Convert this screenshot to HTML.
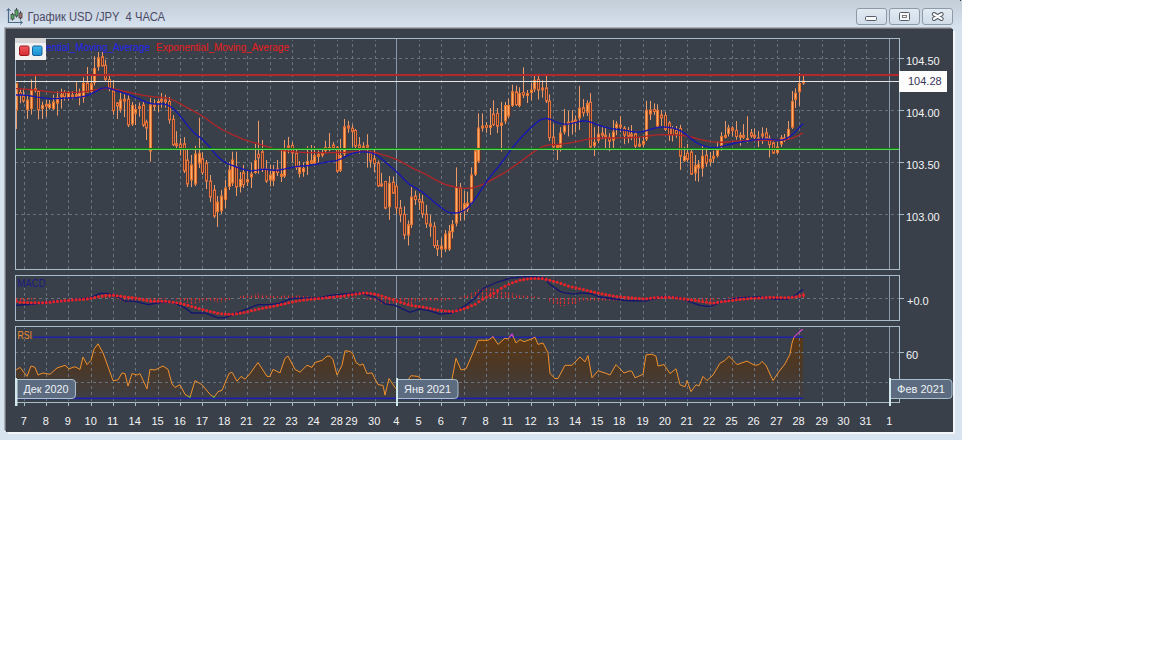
<!DOCTYPE html>
<html><head><meta charset="utf-8"><style>
html,body{margin:0;padding:0;background:#fff;width:1152px;height:648px;overflow:hidden;font-family:"Liberation Sans",sans-serif}
#win{position:absolute;left:0;top:0;width:962px;height:440px;background:linear-gradient(#c3ced9,#ccd7e3 14px,#d6e2ee 27px,#d6e3ef 30px,#d7e4f0)}
#dark{position:absolute;left:6px;top:29px;width:947px;height:403px;background:#39404a;box-shadow:2px 2px 0 #f2f6fa,-1px -1px 0 #76767a,-2px -2px 0 #a9b0b8}
#title{position:absolute;left:27px;top:9px;font-size:12px;line-height:14px;color:#4b4a66;white-space:pre}
.btn{position:absolute;top:8px;height:17px;border:1px solid #8d9aa8;border-radius:3px;background:linear-gradient(#e2eaf2,#d0dce8);box-sizing:border-box}
svg{position:absolute;left:0;top:0}
</style></head><body>
<div id="win"></div>
<div id="dark"></div>
<div class="btn" style="left:856px;width:31px"></div>
<div class="btn" style="left:889px;width:31px"></div>
<div class="btn" style="left:922px;width:31px"></div>
<svg width="1152" height="648" viewBox="0 0 1152 648">
<defs><linearGradient id="rg" gradientUnits="userSpaceOnUse" x1="0" y1="330" x2="0" y2="400"><stop offset="0" stop-color="#603810"/><stop offset="0.55" stop-color="#4a3828"/><stop offset="1" stop-color="#3e3f45"/></linearGradient></defs>
<defs><clipPath id="cfill"><rect x="16" y="337" width="883" height="62"/></clipPath></defs>
<polygon points="16.0,398.0 16.0,370.0 20.0,367.4 27.0,376.4 31.0,366.0 35.0,367.4 38.0,375.0 43.0,373.0 50.0,374.3 57.0,368.0 65.0,365.3 69.0,368.8 75.0,366.7 80.0,369.4 83.0,357.0 87.0,364.6 91.0,360.4 94.0,349.3 98.0,343.8 103.0,352.8 113.0,380.6 118.0,379.9 122.0,373.0 125.0,373.6 128.0,386.0 132.0,373.6 137.0,375.0 140.0,373.6 147.0,388.9 150.0,369.4 155.0,370.0 163.0,366.0 168.0,369.4 172.0,384.0 175.0,387.5 180.0,384.7 185.0,394.4 190.0,397.2 195.0,380.6 202.0,384.7 210.0,394.4 214.0,397.2 218.0,391.7 222.0,390.3 229.0,373.6 232.0,372.2 237.0,381.2 241.0,376.4 245.0,379.2 250.0,373.6 258.0,362.5 267.0,376.4 270.0,376.4 273.0,369.4 280.0,372.9 285.0,358.3 288.0,356.2 295.0,369.4 300.0,372.2 307.0,365.3 312.0,367.4 315.0,362.5 322.0,360.4 327.0,356.2 330.0,356.2 333.0,359.7 337.0,375.0 342.0,365.3 345.0,350.7 350.0,351.4 353.0,354.2 356.0,362.5 360.0,365.3 363.0,363.9 367.0,373.6 372.0,372.9 378.0,384.7 383.0,385.4 385.0,395.1 389.0,378.5 395.0,387.5 400.0,392.0 405.0,384.0 411.0,375.7 418.0,376.4 421.0,379.0 428.0,385.0 436.0,390.0 444.0,388.0 452.0,379.0 456.0,358.3 461.0,370.0 466.0,368.8 473.0,352.8 478.0,340.3 488.0,340.3 493.0,336.8 498.0,344.4 505.0,338.2 508.0,338.9 512.0,334.0 516.0,343.0 520.0,339.6 524.0,341.7 530.0,339.6 535.0,337.2 538.0,344.4 543.0,343.0 548.0,352.8 550.0,373.6 555.0,378.5 558.0,378.5 565.0,365.3 572.0,365.3 580.0,357.0 585.0,361.8 588.0,355.6 592.0,377.8 598.0,370.8 605.0,373.0 610.0,375.0 616.0,364.6 624.0,373.0 630.0,370.8 632.0,371.5 635.0,377.8 643.0,374.3 646.0,354.9 652.0,354.2 656.0,356.2 658.0,366.0 664.0,364.6 670.0,373.6 676.0,368.8 680.0,384.7 685.0,386.8 687.0,380.6 691.0,391.7 696.0,384.7 699.0,386.0 703.0,376.4 707.0,380.6 713.0,375.0 720.0,363.2 725.0,360.4 729.0,356.2 735.0,362.5 737.0,364.6 743.0,362.5 747.0,361.1 752.0,363.9 755.0,365.3 759.0,364.6 762.0,361.4 766.0,365.3 773.0,380.6 778.0,373.0 785.0,363.9 790.0,354.2 792.0,343.0 794.0,337.2 800.0,331.2 803.0,329.2 803.0,398.0" fill="url(#rg)" clip-path="url(#cfill)"/>
<line x1="24.5" y1="40" x2="24.5" y2="269" stroke="#69737e" stroke-dasharray="3 3" stroke-dashoffset="2"/>
<line x1="46.5" y1="40" x2="46.5" y2="269" stroke="#69737e" stroke-dasharray="3 3" stroke-dashoffset="2"/>
<line x1="68.5" y1="40" x2="68.5" y2="269" stroke="#69737e" stroke-dasharray="3 3" stroke-dashoffset="2"/>
<line x1="91.5" y1="40" x2="91.5" y2="269" stroke="#69737e" stroke-dasharray="3 3" stroke-dashoffset="2"/>
<line x1="113.5" y1="40" x2="113.5" y2="269" stroke="#69737e" stroke-dasharray="3 3" stroke-dashoffset="2"/>
<line x1="135.5" y1="40" x2="135.5" y2="269" stroke="#69737e" stroke-dasharray="3 3" stroke-dashoffset="2"/>
<line x1="158.5" y1="40" x2="158.5" y2="269" stroke="#69737e" stroke-dasharray="3 3" stroke-dashoffset="2"/>
<line x1="180.5" y1="40" x2="180.5" y2="269" stroke="#69737e" stroke-dasharray="3 3" stroke-dashoffset="2"/>
<line x1="202.5" y1="40" x2="202.5" y2="269" stroke="#69737e" stroke-dasharray="3 3" stroke-dashoffset="2"/>
<line x1="225.5" y1="40" x2="225.5" y2="269" stroke="#69737e" stroke-dasharray="3 3" stroke-dashoffset="2"/>
<line x1="247.5" y1="40" x2="247.5" y2="269" stroke="#69737e" stroke-dasharray="3 3" stroke-dashoffset="2"/>
<line x1="270.5" y1="40" x2="270.5" y2="269" stroke="#69737e" stroke-dasharray="3 3" stroke-dashoffset="2"/>
<line x1="292.5" y1="40" x2="292.5" y2="269" stroke="#69737e" stroke-dasharray="3 3" stroke-dashoffset="2"/>
<line x1="314.5" y1="40" x2="314.5" y2="269" stroke="#69737e" stroke-dasharray="3 3" stroke-dashoffset="2"/>
<line x1="337.5" y1="40" x2="337.5" y2="269" stroke="#69737e" stroke-dasharray="3 3" stroke-dashoffset="2"/>
<line x1="352.5" y1="40" x2="352.5" y2="269" stroke="#69737e" stroke-dasharray="3 3" stroke-dashoffset="2"/>
<line x1="375.5" y1="40" x2="375.5" y2="269" stroke="#69737e" stroke-dasharray="3 3" stroke-dashoffset="2"/>
<line x1="419.5" y1="40" x2="419.5" y2="269" stroke="#69737e" stroke-dasharray="3 3" stroke-dashoffset="2"/>
<line x1="441.5" y1="40" x2="441.5" y2="269" stroke="#69737e" stroke-dasharray="3 3" stroke-dashoffset="2"/>
<line x1="464.5" y1="40" x2="464.5" y2="269" stroke="#69737e" stroke-dasharray="3 3" stroke-dashoffset="2"/>
<line x1="486.5" y1="40" x2="486.5" y2="269" stroke="#69737e" stroke-dasharray="3 3" stroke-dashoffset="2"/>
<line x1="508.5" y1="40" x2="508.5" y2="269" stroke="#69737e" stroke-dasharray="3 3" stroke-dashoffset="2"/>
<line x1="531.5" y1="40" x2="531.5" y2="269" stroke="#69737e" stroke-dasharray="3 3" stroke-dashoffset="2"/>
<line x1="553.5" y1="40" x2="553.5" y2="269" stroke="#69737e" stroke-dasharray="3 3" stroke-dashoffset="2"/>
<line x1="575.5" y1="40" x2="575.5" y2="269" stroke="#69737e" stroke-dasharray="3 3" stroke-dashoffset="2"/>
<line x1="598.5" y1="40" x2="598.5" y2="269" stroke="#69737e" stroke-dasharray="3 3" stroke-dashoffset="2"/>
<line x1="620.5" y1="40" x2="620.5" y2="269" stroke="#69737e" stroke-dasharray="3 3" stroke-dashoffset="2"/>
<line x1="643.5" y1="40" x2="643.5" y2="269" stroke="#69737e" stroke-dasharray="3 3" stroke-dashoffset="2"/>
<line x1="665.5" y1="40" x2="665.5" y2="269" stroke="#69737e" stroke-dasharray="3 3" stroke-dashoffset="2"/>
<line x1="687.5" y1="40" x2="687.5" y2="269" stroke="#69737e" stroke-dasharray="3 3" stroke-dashoffset="2"/>
<line x1="710.5" y1="40" x2="710.5" y2="269" stroke="#69737e" stroke-dasharray="3 3" stroke-dashoffset="2"/>
<line x1="732.5" y1="40" x2="732.5" y2="269" stroke="#69737e" stroke-dasharray="3 3" stroke-dashoffset="2"/>
<line x1="754.5" y1="40" x2="754.5" y2="269" stroke="#69737e" stroke-dasharray="3 3" stroke-dashoffset="2"/>
<line x1="777.5" y1="40" x2="777.5" y2="269" stroke="#69737e" stroke-dasharray="3 3" stroke-dashoffset="2"/>
<line x1="799.5" y1="40" x2="799.5" y2="269" stroke="#69737e" stroke-dasharray="3 3" stroke-dashoffset="2"/>
<line x1="822.5" y1="40" x2="822.5" y2="269" stroke="#69737e" stroke-dasharray="3 3" stroke-dashoffset="2"/>
<line x1="844.5" y1="40" x2="844.5" y2="269" stroke="#69737e" stroke-dasharray="3 3" stroke-dashoffset="2"/>
<line x1="866.5" y1="40" x2="866.5" y2="269" stroke="#69737e" stroke-dasharray="3 3" stroke-dashoffset="2"/>
<line x1="16" y1="58.5" x2="899" y2="58.5" stroke="#69737e" stroke-dasharray="3 3" stroke-dashoffset="1"/>
<line x1="16" y1="110.5" x2="899" y2="110.5" stroke="#69737e" stroke-dasharray="3 3" stroke-dashoffset="1"/>
<line x1="16" y1="162.5" x2="899" y2="162.5" stroke="#69737e" stroke-dasharray="3 3" stroke-dashoffset="1"/>
<line x1="16" y1="214.5" x2="899" y2="214.5" stroke="#69737e" stroke-dasharray="3 3" stroke-dashoffset="1"/>
<line x1="24.5" y1="277" x2="24.5" y2="320" stroke="#69737e" stroke-dasharray="3 3" stroke-dashoffset="2"/>
<line x1="46.5" y1="277" x2="46.5" y2="320" stroke="#69737e" stroke-dasharray="3 3" stroke-dashoffset="2"/>
<line x1="68.5" y1="277" x2="68.5" y2="320" stroke="#69737e" stroke-dasharray="3 3" stroke-dashoffset="2"/>
<line x1="91.5" y1="277" x2="91.5" y2="320" stroke="#69737e" stroke-dasharray="3 3" stroke-dashoffset="2"/>
<line x1="113.5" y1="277" x2="113.5" y2="320" stroke="#69737e" stroke-dasharray="3 3" stroke-dashoffset="2"/>
<line x1="135.5" y1="277" x2="135.5" y2="320" stroke="#69737e" stroke-dasharray="3 3" stroke-dashoffset="2"/>
<line x1="158.5" y1="277" x2="158.5" y2="320" stroke="#69737e" stroke-dasharray="3 3" stroke-dashoffset="2"/>
<line x1="180.5" y1="277" x2="180.5" y2="320" stroke="#69737e" stroke-dasharray="3 3" stroke-dashoffset="2"/>
<line x1="202.5" y1="277" x2="202.5" y2="320" stroke="#69737e" stroke-dasharray="3 3" stroke-dashoffset="2"/>
<line x1="225.5" y1="277" x2="225.5" y2="320" stroke="#69737e" stroke-dasharray="3 3" stroke-dashoffset="2"/>
<line x1="247.5" y1="277" x2="247.5" y2="320" stroke="#69737e" stroke-dasharray="3 3" stroke-dashoffset="2"/>
<line x1="270.5" y1="277" x2="270.5" y2="320" stroke="#69737e" stroke-dasharray="3 3" stroke-dashoffset="2"/>
<line x1="292.5" y1="277" x2="292.5" y2="320" stroke="#69737e" stroke-dasharray="3 3" stroke-dashoffset="2"/>
<line x1="314.5" y1="277" x2="314.5" y2="320" stroke="#69737e" stroke-dasharray="3 3" stroke-dashoffset="2"/>
<line x1="337.5" y1="277" x2="337.5" y2="320" stroke="#69737e" stroke-dasharray="3 3" stroke-dashoffset="2"/>
<line x1="352.5" y1="277" x2="352.5" y2="320" stroke="#69737e" stroke-dasharray="3 3" stroke-dashoffset="2"/>
<line x1="375.5" y1="277" x2="375.5" y2="320" stroke="#69737e" stroke-dasharray="3 3" stroke-dashoffset="2"/>
<line x1="419.5" y1="277" x2="419.5" y2="320" stroke="#69737e" stroke-dasharray="3 3" stroke-dashoffset="2"/>
<line x1="441.5" y1="277" x2="441.5" y2="320" stroke="#69737e" stroke-dasharray="3 3" stroke-dashoffset="2"/>
<line x1="464.5" y1="277" x2="464.5" y2="320" stroke="#69737e" stroke-dasharray="3 3" stroke-dashoffset="2"/>
<line x1="486.5" y1="277" x2="486.5" y2="320" stroke="#69737e" stroke-dasharray="3 3" stroke-dashoffset="2"/>
<line x1="508.5" y1="277" x2="508.5" y2="320" stroke="#69737e" stroke-dasharray="3 3" stroke-dashoffset="2"/>
<line x1="531.5" y1="277" x2="531.5" y2="320" stroke="#69737e" stroke-dasharray="3 3" stroke-dashoffset="2"/>
<line x1="553.5" y1="277" x2="553.5" y2="320" stroke="#69737e" stroke-dasharray="3 3" stroke-dashoffset="2"/>
<line x1="575.5" y1="277" x2="575.5" y2="320" stroke="#69737e" stroke-dasharray="3 3" stroke-dashoffset="2"/>
<line x1="598.5" y1="277" x2="598.5" y2="320" stroke="#69737e" stroke-dasharray="3 3" stroke-dashoffset="2"/>
<line x1="620.5" y1="277" x2="620.5" y2="320" stroke="#69737e" stroke-dasharray="3 3" stroke-dashoffset="2"/>
<line x1="643.5" y1="277" x2="643.5" y2="320" stroke="#69737e" stroke-dasharray="3 3" stroke-dashoffset="2"/>
<line x1="665.5" y1="277" x2="665.5" y2="320" stroke="#69737e" stroke-dasharray="3 3" stroke-dashoffset="2"/>
<line x1="687.5" y1="277" x2="687.5" y2="320" stroke="#69737e" stroke-dasharray="3 3" stroke-dashoffset="2"/>
<line x1="710.5" y1="277" x2="710.5" y2="320" stroke="#69737e" stroke-dasharray="3 3" stroke-dashoffset="2"/>
<line x1="732.5" y1="277" x2="732.5" y2="320" stroke="#69737e" stroke-dasharray="3 3" stroke-dashoffset="2"/>
<line x1="754.5" y1="277" x2="754.5" y2="320" stroke="#69737e" stroke-dasharray="3 3" stroke-dashoffset="2"/>
<line x1="777.5" y1="277" x2="777.5" y2="320" stroke="#69737e" stroke-dasharray="3 3" stroke-dashoffset="2"/>
<line x1="799.5" y1="277" x2="799.5" y2="320" stroke="#69737e" stroke-dasharray="3 3" stroke-dashoffset="2"/>
<line x1="822.5" y1="277" x2="822.5" y2="320" stroke="#69737e" stroke-dasharray="3 3" stroke-dashoffset="2"/>
<line x1="844.5" y1="277" x2="844.5" y2="320" stroke="#69737e" stroke-dasharray="3 3" stroke-dashoffset="2"/>
<line x1="866.5" y1="277" x2="866.5" y2="320" stroke="#69737e" stroke-dasharray="3 3" stroke-dashoffset="2"/>
<line x1="16" y1="298.5" x2="899" y2="298.5" stroke="#69737e" stroke-dasharray="3 3" stroke-dashoffset="1"/>
<line x1="24.5" y1="328" x2="24.5" y2="402" stroke="#69737e" stroke-dasharray="3 3" stroke-dashoffset="2"/>
<line x1="46.5" y1="328" x2="46.5" y2="402" stroke="#69737e" stroke-dasharray="3 3" stroke-dashoffset="2"/>
<line x1="68.5" y1="328" x2="68.5" y2="402" stroke="#69737e" stroke-dasharray="3 3" stroke-dashoffset="2"/>
<line x1="91.5" y1="328" x2="91.5" y2="402" stroke="#69737e" stroke-dasharray="3 3" stroke-dashoffset="2"/>
<line x1="113.5" y1="328" x2="113.5" y2="402" stroke="#69737e" stroke-dasharray="3 3" stroke-dashoffset="2"/>
<line x1="135.5" y1="328" x2="135.5" y2="402" stroke="#69737e" stroke-dasharray="3 3" stroke-dashoffset="2"/>
<line x1="158.5" y1="328" x2="158.5" y2="402" stroke="#69737e" stroke-dasharray="3 3" stroke-dashoffset="2"/>
<line x1="180.5" y1="328" x2="180.5" y2="402" stroke="#69737e" stroke-dasharray="3 3" stroke-dashoffset="2"/>
<line x1="202.5" y1="328" x2="202.5" y2="402" stroke="#69737e" stroke-dasharray="3 3" stroke-dashoffset="2"/>
<line x1="225.5" y1="328" x2="225.5" y2="402" stroke="#69737e" stroke-dasharray="3 3" stroke-dashoffset="2"/>
<line x1="247.5" y1="328" x2="247.5" y2="402" stroke="#69737e" stroke-dasharray="3 3" stroke-dashoffset="2"/>
<line x1="270.5" y1="328" x2="270.5" y2="402" stroke="#69737e" stroke-dasharray="3 3" stroke-dashoffset="2"/>
<line x1="292.5" y1="328" x2="292.5" y2="402" stroke="#69737e" stroke-dasharray="3 3" stroke-dashoffset="2"/>
<line x1="314.5" y1="328" x2="314.5" y2="402" stroke="#69737e" stroke-dasharray="3 3" stroke-dashoffset="2"/>
<line x1="337.5" y1="328" x2="337.5" y2="402" stroke="#69737e" stroke-dasharray="3 3" stroke-dashoffset="2"/>
<line x1="352.5" y1="328" x2="352.5" y2="402" stroke="#69737e" stroke-dasharray="3 3" stroke-dashoffset="2"/>
<line x1="375.5" y1="328" x2="375.5" y2="402" stroke="#69737e" stroke-dasharray="3 3" stroke-dashoffset="2"/>
<line x1="419.5" y1="328" x2="419.5" y2="402" stroke="#69737e" stroke-dasharray="3 3" stroke-dashoffset="2"/>
<line x1="441.5" y1="328" x2="441.5" y2="402" stroke="#69737e" stroke-dasharray="3 3" stroke-dashoffset="2"/>
<line x1="464.5" y1="328" x2="464.5" y2="402" stroke="#69737e" stroke-dasharray="3 3" stroke-dashoffset="2"/>
<line x1="486.5" y1="328" x2="486.5" y2="402" stroke="#69737e" stroke-dasharray="3 3" stroke-dashoffset="2"/>
<line x1="508.5" y1="328" x2="508.5" y2="402" stroke="#69737e" stroke-dasharray="3 3" stroke-dashoffset="2"/>
<line x1="531.5" y1="328" x2="531.5" y2="402" stroke="#69737e" stroke-dasharray="3 3" stroke-dashoffset="2"/>
<line x1="553.5" y1="328" x2="553.5" y2="402" stroke="#69737e" stroke-dasharray="3 3" stroke-dashoffset="2"/>
<line x1="575.5" y1="328" x2="575.5" y2="402" stroke="#69737e" stroke-dasharray="3 3" stroke-dashoffset="2"/>
<line x1="598.5" y1="328" x2="598.5" y2="402" stroke="#69737e" stroke-dasharray="3 3" stroke-dashoffset="2"/>
<line x1="620.5" y1="328" x2="620.5" y2="402" stroke="#69737e" stroke-dasharray="3 3" stroke-dashoffset="2"/>
<line x1="643.5" y1="328" x2="643.5" y2="402" stroke="#69737e" stroke-dasharray="3 3" stroke-dashoffset="2"/>
<line x1="665.5" y1="328" x2="665.5" y2="402" stroke="#69737e" stroke-dasharray="3 3" stroke-dashoffset="2"/>
<line x1="687.5" y1="328" x2="687.5" y2="402" stroke="#69737e" stroke-dasharray="3 3" stroke-dashoffset="2"/>
<line x1="710.5" y1="328" x2="710.5" y2="402" stroke="#69737e" stroke-dasharray="3 3" stroke-dashoffset="2"/>
<line x1="732.5" y1="328" x2="732.5" y2="402" stroke="#69737e" stroke-dasharray="3 3" stroke-dashoffset="2"/>
<line x1="754.5" y1="328" x2="754.5" y2="402" stroke="#69737e" stroke-dasharray="3 3" stroke-dashoffset="2"/>
<line x1="777.5" y1="328" x2="777.5" y2="402" stroke="#69737e" stroke-dasharray="3 3" stroke-dashoffset="2"/>
<line x1="799.5" y1="328" x2="799.5" y2="402" stroke="#69737e" stroke-dasharray="3 3" stroke-dashoffset="2"/>
<line x1="822.5" y1="328" x2="822.5" y2="402" stroke="#69737e" stroke-dasharray="3 3" stroke-dashoffset="2"/>
<line x1="844.5" y1="328" x2="844.5" y2="402" stroke="#69737e" stroke-dasharray="3 3" stroke-dashoffset="2"/>
<line x1="866.5" y1="328" x2="866.5" y2="402" stroke="#69737e" stroke-dasharray="3 3" stroke-dashoffset="2"/>
<line x1="16" y1="352.5" x2="899" y2="352.5" stroke="#69737e" stroke-dasharray="3 3" stroke-dashoffset="1"/>
<line x1="16" y1="382.5" x2="899" y2="382.5" stroke="#69737e" stroke-dasharray="3 3" stroke-dashoffset="1"/>
<line x1="396.5" y1="39" x2="396.5" y2="269" stroke="#8898a8"/>
<line x1="396.5" y1="276" x2="396.5" y2="320" stroke="#8898a8"/>
<line x1="396.5" y1="327" x2="396.5" y2="402" stroke="#8898a8"/>
<line x1="889.5" y1="39" x2="889.5" y2="269" stroke="#8898a8"/>
<line x1="889.5" y1="276" x2="889.5" y2="320" stroke="#8898a8"/>
<line x1="889.5" y1="327" x2="889.5" y2="402" stroke="#8898a8"/>
<defs><clipPath id="cm"><rect x="16" y="39" width="883" height="230"/></clipPath><clipPath id="cr"><rect x="16" y="327" width="883" height="75"/></clipPath></defs>
<g clip-path="url(#cm)">
<line x1="16.5" y1="83.0" x2="16.5" y2="129.0" stroke="#ec9a68"/>
<rect x="18.0" y="83.2" width="1" height="27.0" fill="#5e3024" opacity="0.8"/>
<rect x="15.5" y="83.2" width="2" height="27.0" fill="#f8ae6c" stroke="#e47634"/>
<line x1="20.5" y1="89.7" x2="20.5" y2="103.2" stroke="#ec9a68"/>
<rect x="19.5" y="92.5" width="2" height="2.0" fill="#53342e" stroke="#e4703a"/>
<line x1="23.5" y1="88.6" x2="23.5" y2="102.7" stroke="#ec9a68"/>
<rect x="22.5" y="95.6" width="2" height="5.4" fill="#53342e" stroke="#e4703a"/>
<line x1="27.5" y1="94.6" x2="27.5" y2="118.9" stroke="#ec9a68"/>
<rect x="29.0" y="100.0" width="1" height="9.7" fill="#5e3024" opacity="0.8"/>
<rect x="26.5" y="100.0" width="2" height="9.7" fill="#f8ae6c" stroke="#e47634"/>
<line x1="31.5" y1="79.4" x2="31.5" y2="114.5" stroke="#ec9a68"/>
<rect x="33.0" y="89.7" width="1" height="18.9" fill="#5e3024" opacity="0.8"/>
<rect x="30.5" y="89.7" width="2" height="18.9" fill="#f8ae6c" stroke="#e47634"/>
<line x1="35.5" y1="76.2" x2="35.5" y2="92.4" stroke="#ec9a68"/>
<rect x="34.5" y="88.6" width="2" height="2.0" fill="#53342e" stroke="#e4703a"/>
<line x1="38.5" y1="90.8" x2="38.5" y2="119.4" stroke="#ec9a68"/>
<rect x="37.5" y="91.3" width="2" height="18.4" fill="#53342e" stroke="#e4703a"/>
<line x1="42.5" y1="101.6" x2="42.5" y2="118.9" stroke="#ec9a68"/>
<rect x="44.0" y="105.4" width="1" height="3.2" fill="#5e3024" opacity="0.8"/>
<rect x="41.5" y="105.4" width="2" height="3.2" fill="#f8ae6c" stroke="#e47634"/>
<line x1="46.5" y1="100.0" x2="46.5" y2="116.7" stroke="#ec9a68"/>
<rect x="45.5" y="104.3" width="2" height="2.0" fill="#53342e" stroke="#e4703a"/>
<line x1="49.5" y1="100.0" x2="49.5" y2="109.7" stroke="#ec9a68"/>
<rect x="51.0" y="104.3" width="1" height="3.2" fill="#5e3024" opacity="0.8"/>
<rect x="48.5" y="104.3" width="2" height="3.2" fill="#f8ae6c" stroke="#e47634"/>
<line x1="53.5" y1="94.6" x2="53.5" y2="110.0" stroke="#ec9a68"/>
<rect x="55.0" y="102.0" width="1" height="6.6" fill="#5e3024" opacity="0.8"/>
<rect x="52.5" y="102.0" width="2" height="6.6" fill="#f8ae6c" stroke="#e47634"/>
<line x1="57.5" y1="91.3" x2="57.5" y2="115.6" stroke="#ec9a68"/>
<rect x="59.0" y="97.8" width="1" height="5.4" fill="#5e3024" opacity="0.8"/>
<rect x="56.5" y="97.8" width="2" height="5.4" fill="#f8ae6c" stroke="#e47634"/>
<line x1="61.5" y1="88.6" x2="61.5" y2="108.6" stroke="#ec9a68"/>
<rect x="63.0" y="94.6" width="1" height="2.0" fill="#5e3024" opacity="0.8"/>
<rect x="60.5" y="94.6" width="2" height="2.0" fill="#f8ae6c" stroke="#e47634"/>
<line x1="64.5" y1="90.2" x2="64.5" y2="100.5" stroke="#ec9a68"/>
<rect x="63.5" y="92.4" width="2" height="4.3" fill="#53342e" stroke="#e4703a"/>
<line x1="68.5" y1="90.8" x2="68.5" y2="100.5" stroke="#ec9a68"/>
<rect x="70.0" y="93.5" width="1" height="4.3" fill="#5e3024" opacity="0.8"/>
<rect x="67.5" y="93.5" width="2" height="4.3" fill="#f8ae6c" stroke="#e47634"/>
<line x1="72.5" y1="91.3" x2="72.5" y2="99.4" stroke="#ec9a68"/>
<rect x="71.5" y="95.0" width="2" height="2.0" fill="#53342e" stroke="#e4703a"/>
<line x1="76.5" y1="82.1" x2="76.5" y2="97.3" stroke="#ec9a68"/>
<rect x="78.0" y="94.6" width="1" height="2.1" fill="#5e3024" opacity="0.8"/>
<rect x="75.5" y="94.6" width="2" height="2.1" fill="#f8ae6c" stroke="#e47634"/>
<line x1="79.5" y1="88.6" x2="79.5" y2="105.4" stroke="#ec9a68"/>
<rect x="81.0" y="93.5" width="1" height="3.2" fill="#5e3024" opacity="0.8"/>
<rect x="78.5" y="93.5" width="2" height="3.2" fill="#f8ae6c" stroke="#e47634"/>
<line x1="83.5" y1="77.3" x2="83.5" y2="102.7" stroke="#ec9a68"/>
<rect x="85.0" y="83.2" width="1" height="14.1" fill="#5e3024" opacity="0.8"/>
<rect x="82.5" y="83.2" width="2" height="14.1" fill="#f8ae6c" stroke="#e47634"/>
<line x1="87.5" y1="67.0" x2="87.5" y2="92.4" stroke="#ec9a68"/>
<rect x="86.5" y="82.8" width="2" height="9.3" fill="#53342e" stroke="#e4703a"/>
<line x1="91.5" y1="75.1" x2="91.5" y2="92.4" stroke="#ec9a68"/>
<rect x="93.0" y="83.6" width="1" height="7.7" fill="#5e3024" opacity="0.8"/>
<rect x="90.5" y="83.6" width="2" height="7.7" fill="#f8ae6c" stroke="#e47634"/>
<line x1="94.5" y1="56.2" x2="94.5" y2="85.4" stroke="#ec9a68"/>
<rect x="96.0" y="68.4" width="1" height="14.1" fill="#5e3024" opacity="0.8"/>
<rect x="93.5" y="68.4" width="2" height="14.1" fill="#f8ae6c" stroke="#e47634"/>
<line x1="98.5" y1="52.0" x2="98.5" y2="70.8" stroke="#ec9a68"/>
<rect x="100.0" y="57.7" width="1" height="8.9" fill="#5e3024" opacity="0.8"/>
<rect x="97.5" y="57.7" width="2" height="8.9" fill="#f8ae6c" stroke="#e47634"/>
<line x1="102.5" y1="52.0" x2="102.5" y2="66.6" stroke="#ec9a68"/>
<rect x="101.5" y="56.6" width="2" height="9.2" fill="#53342e" stroke="#e4703a"/>
<line x1="105.5" y1="59.8" x2="105.5" y2="82.0" stroke="#ec9a68"/>
<rect x="104.5" y="65.2" width="2" height="14.2" fill="#53342e" stroke="#e4703a"/>
<line x1="109.5" y1="75.1" x2="109.5" y2="91.3" stroke="#ec9a68"/>
<rect x="108.5" y="79.5" width="2" height="8.7" fill="#53342e" stroke="#e4703a"/>
<line x1="113.5" y1="80.0" x2="113.5" y2="114.9" stroke="#ec9a68"/>
<rect x="112.5" y="90.6" width="2" height="20.1" fill="#53342e" stroke="#e4703a"/>
<line x1="117.5" y1="102.0" x2="117.5" y2="119.0" stroke="#ec9a68"/>
<rect x="116.5" y="103.0" width="2" height="3.0" fill="#53342e" stroke="#e4703a"/>
<line x1="120.5" y1="92.5" x2="120.5" y2="112.7" stroke="#ec9a68"/>
<rect x="122.0" y="99.8" width="1" height="9.6" fill="#5e3024" opacity="0.8"/>
<rect x="119.5" y="99.8" width="2" height="9.6" fill="#f8ae6c" stroke="#e47634"/>
<line x1="124.5" y1="94.0" x2="124.5" y2="117.0" stroke="#ec9a68"/>
<rect x="123.5" y="99.2" width="2" height="2.0" fill="#53342e" stroke="#e4703a"/>
<line x1="128.5" y1="94.7" x2="128.5" y2="127.0" stroke="#ec9a68"/>
<rect x="127.5" y="99.2" width="2" height="25.8" fill="#53342e" stroke="#e4703a"/>
<line x1="132.5" y1="102.0" x2="132.5" y2="126.0" stroke="#ec9a68"/>
<rect x="134.0" y="105.4" width="1" height="18.6" fill="#5e3024" opacity="0.8"/>
<rect x="131.5" y="105.4" width="2" height="18.6" fill="#f8ae6c" stroke="#e47634"/>
<line x1="135.5" y1="104.3" x2="135.5" y2="125.0" stroke="#ec9a68"/>
<rect x="137.0" y="109.4" width="1" height="3.9" fill="#5e3024" opacity="0.8"/>
<rect x="134.5" y="109.4" width="2" height="3.9" fill="#f8ae6c" stroke="#e47634"/>
<line x1="139.5" y1="102.6" x2="139.5" y2="116.7" stroke="#ec9a68"/>
<rect x="138.5" y="106.6" width="2" height="2.0" fill="#53342e" stroke="#e4703a"/>
<line x1="143.5" y1="102.0" x2="143.5" y2="127.0" stroke="#ec9a68"/>
<rect x="142.5" y="104.9" width="2" height="20.1" fill="#53342e" stroke="#e4703a"/>
<line x1="146.5" y1="119.7" x2="146.5" y2="140.0" stroke="#ec9a68"/>
<rect x="145.5" y="122.0" width="2" height="6.0" fill="#53342e" stroke="#e4703a"/>
<line x1="150.5" y1="98.0" x2="150.5" y2="161.7" stroke="#ec9a68"/>
<rect x="152.0" y="104.9" width="1" height="46.1" fill="#5e3024" opacity="0.8"/>
<rect x="149.5" y="104.9" width="2" height="46.1" fill="#f8ae6c" stroke="#e47634"/>
<line x1="154.5" y1="99.2" x2="154.5" y2="110.5" stroke="#ec9a68"/>
<rect x="156.0" y="104.3" width="1" height="2.0" fill="#5e3024" opacity="0.8"/>
<rect x="153.5" y="104.3" width="2" height="2.0" fill="#f8ae6c" stroke="#e47634"/>
<line x1="158.5" y1="99.2" x2="158.5" y2="112.2" stroke="#ec9a68"/>
<rect x="160.0" y="101.5" width="1" height="2.0" fill="#5e3024" opacity="0.8"/>
<rect x="157.5" y="101.5" width="2" height="2.0" fill="#f8ae6c" stroke="#e47634"/>
<line x1="161.5" y1="93.0" x2="161.5" y2="107.7" stroke="#ec9a68"/>
<rect x="160.5" y="99.2" width="2" height="2.0" fill="#53342e" stroke="#e4703a"/>
<line x1="165.5" y1="94.7" x2="165.5" y2="107.7" stroke="#ec9a68"/>
<rect x="164.5" y="99.8" width="2" height="2.0" fill="#53342e" stroke="#e4703a"/>
<line x1="169.5" y1="97.0" x2="169.5" y2="123.6" stroke="#ec9a68"/>
<rect x="168.5" y="101.5" width="2" height="18.3" fill="#53342e" stroke="#e4703a"/>
<line x1="173.5" y1="115.0" x2="173.5" y2="146.0" stroke="#ec9a68"/>
<rect x="172.5" y="119.3" width="2" height="25.4" fill="#53342e" stroke="#e4703a"/>
<line x1="176.5" y1="131.2" x2="176.5" y2="150.0" stroke="#ec9a68"/>
<rect x="175.5" y="143.6" width="2" height="2.2" fill="#53342e" stroke="#e4703a"/>
<line x1="180.5" y1="138.2" x2="180.5" y2="155.5" stroke="#ec9a68"/>
<rect x="179.5" y="144.0" width="2" height="3.9" fill="#53342e" stroke="#e4703a"/>
<line x1="184.5" y1="137.1" x2="184.5" y2="173.0" stroke="#ec9a68"/>
<rect x="183.5" y="143.6" width="2" height="27.4" fill="#53342e" stroke="#e4703a"/>
<line x1="187.5" y1="150.0" x2="187.5" y2="187.0" stroke="#ec9a68"/>
<rect x="186.5" y="160.0" width="2" height="24.0" fill="#53342e" stroke="#e4703a"/>
<line x1="191.5" y1="155.0" x2="191.5" y2="187.0" stroke="#ec9a68"/>
<rect x="193.0" y="165.0" width="1" height="15.0" fill="#5e3024" opacity="0.8"/>
<rect x="190.5" y="165.0" width="2" height="15.0" fill="#f8ae6c" stroke="#e47634"/>
<line x1="195.5" y1="145.8" x2="195.5" y2="186.0" stroke="#ec9a68"/>
<rect x="197.0" y="153.9" width="1" height="30.1" fill="#5e3024" opacity="0.8"/>
<rect x="194.5" y="153.9" width="2" height="30.1" fill="#f8ae6c" stroke="#e47634"/>
<line x1="199.5" y1="117.7" x2="199.5" y2="168.0" stroke="#ec9a68"/>
<rect x="201.0" y="153.3" width="1" height="9.7" fill="#5e3024" opacity="0.8"/>
<rect x="198.5" y="153.3" width="2" height="9.7" fill="#f8ae6c" stroke="#e47634"/>
<line x1="202.5" y1="152.2" x2="202.5" y2="175.0" stroke="#ec9a68"/>
<rect x="201.5" y="158.7" width="2" height="13.9" fill="#53342e" stroke="#e4703a"/>
<line x1="206.5" y1="160.0" x2="206.5" y2="189.0" stroke="#ec9a68"/>
<rect x="205.5" y="163.0" width="2" height="18.0" fill="#53342e" stroke="#e4703a"/>
<line x1="210.5" y1="175.0" x2="210.5" y2="202.0" stroke="#ec9a68"/>
<rect x="209.5" y="181.0" width="2" height="16.0" fill="#53342e" stroke="#e4703a"/>
<line x1="214.5" y1="185.0" x2="214.5" y2="218.0" stroke="#ec9a68"/>
<rect x="213.5" y="190.0" width="2" height="26.0" fill="#53342e" stroke="#e4703a"/>
<line x1="217.5" y1="196.0" x2="217.5" y2="227.0" stroke="#ec9a68"/>
<rect x="219.0" y="202.0" width="1" height="9.6" fill="#5e3024" opacity="0.8"/>
<rect x="216.5" y="202.0" width="2" height="9.6" fill="#f8ae6c" stroke="#e47634"/>
<line x1="221.5" y1="190.0" x2="221.5" y2="214.0" stroke="#ec9a68"/>
<rect x="223.0" y="196.0" width="1" height="14.8" fill="#5e3024" opacity="0.8"/>
<rect x="220.5" y="196.0" width="2" height="14.8" fill="#f8ae6c" stroke="#e47634"/>
<line x1="225.5" y1="180.0" x2="225.5" y2="208.0" stroke="#ec9a68"/>
<rect x="227.0" y="188.0" width="1" height="11.5" fill="#5e3024" opacity="0.8"/>
<rect x="224.5" y="188.0" width="2" height="11.5" fill="#f8ae6c" stroke="#e47634"/>
<line x1="229.5" y1="162.0" x2="229.5" y2="190.0" stroke="#ec9a68"/>
<rect x="231.0" y="170.0" width="1" height="16.5" fill="#5e3024" opacity="0.8"/>
<rect x="228.5" y="170.0" width="2" height="16.5" fill="#f8ae6c" stroke="#e47634"/>
<line x1="232.5" y1="151.7" x2="232.5" y2="186.0" stroke="#ec9a68"/>
<rect x="234.0" y="160.0" width="1" height="23.0" fill="#5e3024" opacity="0.8"/>
<rect x="231.5" y="160.0" width="2" height="23.0" fill="#f8ae6c" stroke="#e47634"/>
<line x1="236.5" y1="151.7" x2="236.5" y2="196.0" stroke="#ec9a68"/>
<rect x="235.5" y="166.5" width="2" height="20.5" fill="#53342e" stroke="#e4703a"/>
<line x1="240.5" y1="172.0" x2="240.5" y2="192.5" stroke="#ec9a68"/>
<rect x="242.0" y="179.5" width="1" height="7.0" fill="#5e3024" opacity="0.8"/>
<rect x="239.5" y="179.5" width="2" height="7.0" fill="#f8ae6c" stroke="#e47634"/>
<line x1="243.5" y1="165.0" x2="243.5" y2="188.0" stroke="#ec9a68"/>
<rect x="242.5" y="172.6" width="2" height="12.1" fill="#53342e" stroke="#e4703a"/>
<line x1="247.5" y1="170.0" x2="247.5" y2="186.0" stroke="#ec9a68"/>
<rect x="249.0" y="179.5" width="1" height="2.5" fill="#5e3024" opacity="0.8"/>
<rect x="246.5" y="179.5" width="2" height="2.5" fill="#f8ae6c" stroke="#e47634"/>
<line x1="251.5" y1="163.0" x2="251.5" y2="188.0" stroke="#ec9a68"/>
<rect x="253.0" y="174.0" width="1" height="3.0" fill="#5e3024" opacity="0.8"/>
<rect x="250.5" y="174.0" width="2" height="3.0" fill="#f8ae6c" stroke="#e47634"/>
<line x1="255.5" y1="144.0" x2="255.5" y2="173.7" stroke="#ec9a68"/>
<rect x="257.0" y="160.4" width="1" height="12.2" fill="#5e3024" opacity="0.8"/>
<rect x="254.5" y="160.4" width="2" height="12.2" fill="#f8ae6c" stroke="#e47634"/>
<line x1="258.5" y1="120.8" x2="258.5" y2="173.7" stroke="#ec9a68"/>
<rect x="257.5" y="154.3" width="2" height="3.5" fill="#53342e" stroke="#e4703a"/>
<line x1="262.5" y1="140.0" x2="262.5" y2="172.0" stroke="#ec9a68"/>
<rect x="261.5" y="151.7" width="2" height="17.3" fill="#53342e" stroke="#e4703a"/>
<line x1="266.5" y1="160.0" x2="266.5" y2="183.0" stroke="#ec9a68"/>
<rect x="265.5" y="169.0" width="2" height="12.0" fill="#53342e" stroke="#e4703a"/>
<line x1="270.5" y1="165.0" x2="270.5" y2="186.5" stroke="#ec9a68"/>
<rect x="272.0" y="175.0" width="1" height="5.0" fill="#5e3024" opacity="0.8"/>
<rect x="269.5" y="175.0" width="2" height="5.0" fill="#f8ae6c" stroke="#e47634"/>
<line x1="273.5" y1="165.0" x2="273.5" y2="186.0" stroke="#ec9a68"/>
<rect x="275.0" y="170.8" width="1" height="9.6" fill="#5e3024" opacity="0.8"/>
<rect x="272.5" y="170.8" width="2" height="9.6" fill="#f8ae6c" stroke="#e47634"/>
<line x1="277.5" y1="160.0" x2="277.5" y2="176.0" stroke="#ec9a68"/>
<rect x="276.5" y="169.0" width="2" height="3.6" fill="#53342e" stroke="#e4703a"/>
<line x1="281.5" y1="149.0" x2="281.5" y2="182.0" stroke="#ec9a68"/>
<rect x="283.0" y="174.3" width="1" height="2.0" fill="#5e3024" opacity="0.8"/>
<rect x="280.5" y="174.3" width="2" height="2.0" fill="#f8ae6c" stroke="#e47634"/>
<line x1="284.5" y1="140.0" x2="284.5" y2="178.0" stroke="#ec9a68"/>
<rect x="286.0" y="150.5" width="1" height="25.5" fill="#5e3024" opacity="0.8"/>
<rect x="283.5" y="150.5" width="2" height="25.5" fill="#f8ae6c" stroke="#e47634"/>
<line x1="288.5" y1="136.9" x2="288.5" y2="153.4" stroke="#ec9a68"/>
<rect x="287.5" y="145.8" width="2" height="2.2" fill="#53342e" stroke="#e4703a"/>
<line x1="292.5" y1="142.0" x2="292.5" y2="162.4" stroke="#ec9a68"/>
<rect x="291.5" y="145.4" width="2" height="7.6" fill="#53342e" stroke="#e4703a"/>
<line x1="296.5" y1="148.0" x2="296.5" y2="170.0" stroke="#ec9a68"/>
<rect x="295.5" y="153.0" width="2" height="14.4" fill="#53342e" stroke="#e4703a"/>
<line x1="299.5" y1="161.0" x2="299.5" y2="177.6" stroke="#ec9a68"/>
<rect x="301.0" y="167.4" width="1" height="6.0" fill="#5e3024" opacity="0.8"/>
<rect x="298.5" y="167.4" width="2" height="6.0" fill="#f8ae6c" stroke="#e47634"/>
<line x1="303.5" y1="162.4" x2="303.5" y2="176.8" stroke="#ec9a68"/>
<rect x="305.0" y="168.3" width="1" height="3.4" fill="#5e3024" opacity="0.8"/>
<rect x="302.5" y="168.3" width="2" height="3.4" fill="#f8ae6c" stroke="#e47634"/>
<line x1="307.5" y1="146.2" x2="307.5" y2="175.0" stroke="#ec9a68"/>
<rect x="309.0" y="161.5" width="1" height="3.4" fill="#5e3024" opacity="0.8"/>
<rect x="306.5" y="161.5" width="2" height="3.4" fill="#f8ae6c" stroke="#e47634"/>
<line x1="311.5" y1="145.0" x2="311.5" y2="164.0" stroke="#ec9a68"/>
<rect x="313.0" y="160.7" width="1" height="2.5" fill="#5e3024" opacity="0.8"/>
<rect x="310.5" y="160.7" width="2" height="2.5" fill="#f8ae6c" stroke="#e47634"/>
<line x1="314.5" y1="146.2" x2="314.5" y2="165.0" stroke="#ec9a68"/>
<rect x="316.0" y="155.6" width="1" height="7.6" fill="#5e3024" opacity="0.8"/>
<rect x="313.5" y="155.6" width="2" height="7.6" fill="#f8ae6c" stroke="#e47634"/>
<line x1="318.5" y1="150.5" x2="318.5" y2="162.4" stroke="#ec9a68"/>
<rect x="320.0" y="154.3" width="1" height="2.0" fill="#5e3024" opacity="0.8"/>
<rect x="317.5" y="154.3" width="2" height="2.0" fill="#f8ae6c" stroke="#e47634"/>
<line x1="322.5" y1="148.0" x2="322.5" y2="157.3" stroke="#ec9a68"/>
<rect x="324.0" y="153.0" width="1" height="2.0" fill="#5e3024" opacity="0.8"/>
<rect x="321.5" y="153.0" width="2" height="2.0" fill="#f8ae6c" stroke="#e47634"/>
<line x1="325.5" y1="140.7" x2="325.5" y2="153.4" stroke="#ec9a68"/>
<rect x="327.0" y="147.5" width="1" height="3.0" fill="#5e3024" opacity="0.8"/>
<rect x="324.5" y="147.5" width="2" height="3.0" fill="#f8ae6c" stroke="#e47634"/>
<line x1="329.5" y1="133.0" x2="329.5" y2="151.3" stroke="#ec9a68"/>
<rect x="331.0" y="147.5" width="1" height="2.0" fill="#5e3024" opacity="0.8"/>
<rect x="328.5" y="147.5" width="2" height="2.0" fill="#f8ae6c" stroke="#e47634"/>
<line x1="333.5" y1="142.0" x2="333.5" y2="150.0" stroke="#ec9a68"/>
<rect x="332.5" y="145.0" width="2" height="3.0" fill="#53342e" stroke="#e4703a"/>
<line x1="337.5" y1="146.0" x2="337.5" y2="173.0" stroke="#ec9a68"/>
<rect x="336.5" y="147.2" width="2" height="24.1" fill="#53342e" stroke="#e4703a"/>
<line x1="340.5" y1="138.9" x2="340.5" y2="172.0" stroke="#ec9a68"/>
<rect x="342.0" y="155.5" width="1" height="14.8" fill="#5e3024" opacity="0.8"/>
<rect x="339.5" y="155.5" width="2" height="14.8" fill="#f8ae6c" stroke="#e47634"/>
<line x1="344.5" y1="119.0" x2="344.5" y2="156.0" stroke="#ec9a68"/>
<rect x="346.0" y="126.8" width="1" height="26.9" fill="#5e3024" opacity="0.8"/>
<rect x="343.5" y="126.8" width="2" height="26.9" fill="#f8ae6c" stroke="#e47634"/>
<line x1="348.5" y1="120.8" x2="348.5" y2="132.8" stroke="#ec9a68"/>
<rect x="347.5" y="125.9" width="2" height="2.3" fill="#53342e" stroke="#e4703a"/>
<line x1="352.5" y1="124.5" x2="352.5" y2="147.2" stroke="#ec9a68"/>
<rect x="351.5" y="128.2" width="2" height="3.2" fill="#53342e" stroke="#e4703a"/>
<line x1="355.5" y1="129.0" x2="355.5" y2="148.1" stroke="#ec9a68"/>
<rect x="354.5" y="130.5" width="2" height="15.8" fill="#53342e" stroke="#e4703a"/>
<line x1="359.5" y1="137.0" x2="359.5" y2="153.7" stroke="#ec9a68"/>
<rect x="358.5" y="144.9" width="2" height="3.2" fill="#53342e" stroke="#e4703a"/>
<line x1="363.5" y1="142.1" x2="363.5" y2="148.0" stroke="#ec9a68"/>
<rect x="365.0" y="146.3" width="1" height="2.0" fill="#5e3024" opacity="0.8"/>
<rect x="362.5" y="146.3" width="2" height="2.0" fill="#f8ae6c" stroke="#e47634"/>
<line x1="367.5" y1="134.2" x2="367.5" y2="167.6" stroke="#ec9a68"/>
<rect x="366.5" y="145.3" width="2" height="2.0" fill="#53342e" stroke="#e4703a"/>
<line x1="370.5" y1="150.9" x2="370.5" y2="167.6" stroke="#ec9a68"/>
<rect x="369.5" y="152.7" width="2" height="8.3" fill="#53342e" stroke="#e4703a"/>
<line x1="374.5" y1="150.0" x2="374.5" y2="172.2" stroke="#ec9a68"/>
<rect x="373.5" y="158.6" width="2" height="5.0" fill="#53342e" stroke="#e4703a"/>
<line x1="378.5" y1="160.5" x2="378.5" y2="187.0" stroke="#ec9a68"/>
<rect x="377.5" y="163.0" width="2" height="22.8" fill="#53342e" stroke="#e4703a"/>
<line x1="381.5" y1="172.8" x2="381.5" y2="187.0" stroke="#ec9a68"/>
<rect x="380.5" y="184.0" width="2" height="2.0" fill="#53342e" stroke="#e4703a"/>
<line x1="385.5" y1="180.9" x2="385.5" y2="209.3" stroke="#ec9a68"/>
<rect x="384.5" y="181.5" width="2" height="26.5" fill="#53342e" stroke="#e4703a"/>
<line x1="389.5" y1="176.0" x2="389.5" y2="219.8" stroke="#ec9a68"/>
<rect x="391.0" y="183.3" width="1" height="23.5" fill="#5e3024" opacity="0.8"/>
<rect x="388.5" y="183.3" width="2" height="23.5" fill="#f8ae6c" stroke="#e47634"/>
<line x1="393.5" y1="176.5" x2="393.5" y2="193.8" stroke="#ec9a68"/>
<rect x="392.5" y="182.1" width="2" height="11.1" fill="#53342e" stroke="#e4703a"/>
<line x1="396.5" y1="184.0" x2="396.5" y2="214.2" stroke="#ec9a68"/>
<rect x="395.5" y="186.4" width="2" height="21.6" fill="#53342e" stroke="#e4703a"/>
<line x1="400.5" y1="200.0" x2="400.5" y2="222.2" stroke="#ec9a68"/>
<rect x="399.5" y="208.0" width="2" height="6.8" fill="#53342e" stroke="#e4703a"/>
<line x1="404.5" y1="206.2" x2="404.5" y2="239.4" stroke="#ec9a68"/>
<rect x="403.5" y="214.2" width="2" height="20.8" fill="#53342e" stroke="#e4703a"/>
<line x1="408.5" y1="220.4" x2="408.5" y2="245.5" stroke="#ec9a68"/>
<rect x="410.0" y="224.7" width="1" height="10.3" fill="#5e3024" opacity="0.8"/>
<rect x="407.5" y="224.7" width="2" height="10.3" fill="#f8ae6c" stroke="#e47634"/>
<line x1="411.5" y1="187.0" x2="411.5" y2="228.0" stroke="#ec9a68"/>
<rect x="413.0" y="197.0" width="1" height="27.6" fill="#5e3024" opacity="0.8"/>
<rect x="410.5" y="197.0" width="2" height="27.6" fill="#f8ae6c" stroke="#e47634"/>
<line x1="415.5" y1="190.8" x2="415.5" y2="205.0" stroke="#ec9a68"/>
<rect x="414.5" y="196.0" width="2" height="3.5" fill="#53342e" stroke="#e4703a"/>
<line x1="419.5" y1="193.4" x2="419.5" y2="210.0" stroke="#ec9a68"/>
<rect x="418.5" y="199.5" width="2" height="2.5" fill="#53342e" stroke="#e4703a"/>
<line x1="422.5" y1="195.0" x2="422.5" y2="218.0" stroke="#ec9a68"/>
<rect x="421.5" y="202.0" width="2" height="12.0" fill="#53342e" stroke="#e4703a"/>
<line x1="426.5" y1="205.0" x2="426.5" y2="228.0" stroke="#ec9a68"/>
<rect x="425.5" y="214.0" width="2" height="9.8" fill="#53342e" stroke="#e4703a"/>
<line x1="430.5" y1="215.0" x2="430.5" y2="236.8" stroke="#ec9a68"/>
<rect x="429.5" y="223.8" width="2" height="2.6" fill="#53342e" stroke="#e4703a"/>
<line x1="434.5" y1="222.0" x2="434.5" y2="248.0" stroke="#ec9a68"/>
<rect x="433.5" y="226.4" width="2" height="19.1" fill="#53342e" stroke="#e4703a"/>
<line x1="437.5" y1="240.0" x2="437.5" y2="256.0" stroke="#ec9a68"/>
<rect x="436.5" y="245.5" width="2" height="3.5" fill="#53342e" stroke="#e4703a"/>
<line x1="441.5" y1="238.0" x2="441.5" y2="257.6" stroke="#ec9a68"/>
<rect x="443.0" y="246.0" width="1" height="3.0" fill="#5e3024" opacity="0.8"/>
<rect x="440.5" y="246.0" width="2" height="3.0" fill="#f8ae6c" stroke="#e47634"/>
<line x1="445.5" y1="230.0" x2="445.5" y2="252.0" stroke="#ec9a68"/>
<rect x="447.0" y="234.0" width="1" height="15.0" fill="#5e3024" opacity="0.8"/>
<rect x="444.5" y="234.0" width="2" height="15.0" fill="#f8ae6c" stroke="#e47634"/>
<line x1="449.5" y1="225.0" x2="449.5" y2="251.0" stroke="#ec9a68"/>
<rect x="451.0" y="231.6" width="1" height="17.4" fill="#5e3024" opacity="0.8"/>
<rect x="448.5" y="231.6" width="2" height="17.4" fill="#f8ae6c" stroke="#e47634"/>
<line x1="452.5" y1="220.0" x2="452.5" y2="238.5" stroke="#ec9a68"/>
<rect x="454.0" y="224.6" width="1" height="7.0" fill="#5e3024" opacity="0.8"/>
<rect x="451.5" y="224.6" width="2" height="7.0" fill="#f8ae6c" stroke="#e47634"/>
<line x1="456.5" y1="167.4" x2="456.5" y2="226.4" stroke="#ec9a68"/>
<rect x="458.0" y="187.3" width="1" height="35.7" fill="#5e3024" opacity="0.8"/>
<rect x="455.5" y="187.3" width="2" height="35.7" fill="#f8ae6c" stroke="#e47634"/>
<line x1="460.5" y1="183.0" x2="460.5" y2="221.0" stroke="#ec9a68"/>
<rect x="459.5" y="188.0" width="2" height="24.5" fill="#53342e" stroke="#e4703a"/>
<line x1="464.5" y1="190.8" x2="464.5" y2="220.0" stroke="#ec9a68"/>
<rect x="466.0" y="203.8" width="1" height="7.0" fill="#5e3024" opacity="0.8"/>
<rect x="463.5" y="203.8" width="2" height="7.0" fill="#f8ae6c" stroke="#e47634"/>
<line x1="467.5" y1="191.7" x2="467.5" y2="212.0" stroke="#ec9a68"/>
<rect x="469.0" y="203.0" width="1" height="6.0" fill="#5e3024" opacity="0.8"/>
<rect x="466.5" y="203.0" width="2" height="6.0" fill="#f8ae6c" stroke="#e47634"/>
<line x1="471.5" y1="167.4" x2="471.5" y2="205.0" stroke="#ec9a68"/>
<rect x="473.0" y="175.0" width="1" height="27.0" fill="#5e3024" opacity="0.8"/>
<rect x="470.5" y="175.0" width="2" height="27.0" fill="#f8ae6c" stroke="#e47634"/>
<line x1="475.5" y1="148.0" x2="475.5" y2="176.0" stroke="#ec9a68"/>
<rect x="477.0" y="150.7" width="1" height="23.6" fill="#5e3024" opacity="0.8"/>
<rect x="474.5" y="150.7" width="2" height="23.6" fill="#f8ae6c" stroke="#e47634"/>
<line x1="478.5" y1="113.4" x2="478.5" y2="163.0" stroke="#ec9a68"/>
<rect x="480.0" y="128.0" width="1" height="33.0" fill="#5e3024" opacity="0.8"/>
<rect x="477.5" y="128.0" width="2" height="33.0" fill="#f8ae6c" stroke="#e47634"/>
<line x1="482.5" y1="113.4" x2="482.5" y2="131.6" stroke="#ec9a68"/>
<rect x="484.0" y="126.0" width="1" height="2.0" fill="#5e3024" opacity="0.8"/>
<rect x="481.5" y="126.0" width="2" height="2.0" fill="#f8ae6c" stroke="#e47634"/>
<line x1="486.5" y1="122.0" x2="486.5" y2="133.0" stroke="#ec9a68"/>
<rect x="485.5" y="125.5" width="2" height="2.0" fill="#53342e" stroke="#e4703a"/>
<line x1="490.5" y1="108.0" x2="490.5" y2="135.0" stroke="#ec9a68"/>
<rect x="492.0" y="125.5" width="1" height="2.0" fill="#5e3024" opacity="0.8"/>
<rect x="489.5" y="125.5" width="2" height="2.0" fill="#f8ae6c" stroke="#e47634"/>
<line x1="493.5" y1="100.3" x2="493.5" y2="126.0" stroke="#ec9a68"/>
<rect x="492.5" y="114.0" width="2" height="10.6" fill="#53342e" stroke="#e4703a"/>
<line x1="497.5" y1="108.0" x2="497.5" y2="133.0" stroke="#ec9a68"/>
<rect x="496.5" y="113.4" width="2" height="13.0" fill="#53342e" stroke="#e4703a"/>
<line x1="501.5" y1="102.0" x2="501.5" y2="151.6" stroke="#ec9a68"/>
<rect x="503.0" y="123.0" width="1" height="2.5" fill="#5e3024" opacity="0.8"/>
<rect x="500.5" y="123.0" width="2" height="2.5" fill="#f8ae6c" stroke="#e47634"/>
<line x1="505.5" y1="102.0" x2="505.5" y2="124.0" stroke="#ec9a68"/>
<rect x="507.0" y="105.5" width="1" height="15.5" fill="#5e3024" opacity="0.8"/>
<rect x="504.5" y="105.5" width="2" height="15.5" fill="#f8ae6c" stroke="#e47634"/>
<line x1="508.5" y1="98.6" x2="508.5" y2="118.0" stroke="#ec9a68"/>
<rect x="510.0" y="105.5" width="1" height="10.5" fill="#5e3024" opacity="0.8"/>
<rect x="507.5" y="105.5" width="2" height="10.5" fill="#f8ae6c" stroke="#e47634"/>
<line x1="512.5" y1="84.7" x2="512.5" y2="107.0" stroke="#ec9a68"/>
<rect x="514.0" y="91.7" width="1" height="13.8" fill="#5e3024" opacity="0.8"/>
<rect x="511.5" y="91.7" width="2" height="13.8" fill="#f8ae6c" stroke="#e47634"/>
<line x1="516.5" y1="85.6" x2="516.5" y2="106.0" stroke="#ec9a68"/>
<rect x="515.5" y="91.7" width="2" height="13.0" fill="#53342e" stroke="#e4703a"/>
<line x1="519.5" y1="87.3" x2="519.5" y2="107.3" stroke="#ec9a68"/>
<rect x="521.0" y="93.4" width="1" height="12.1" fill="#5e3024" opacity="0.8"/>
<rect x="518.5" y="93.4" width="2" height="12.1" fill="#f8ae6c" stroke="#e47634"/>
<line x1="523.5" y1="67.4" x2="523.5" y2="98.0" stroke="#ec9a68"/>
<rect x="522.5" y="92.5" width="2" height="2.5" fill="#53342e" stroke="#e4703a"/>
<line x1="527.5" y1="90.0" x2="527.5" y2="103.0" stroke="#ec9a68"/>
<rect x="529.0" y="93.5" width="1" height="2.0" fill="#5e3024" opacity="0.8"/>
<rect x="526.5" y="93.5" width="2" height="2.0" fill="#f8ae6c" stroke="#e47634"/>
<line x1="531.5" y1="83.0" x2="531.5" y2="100.3" stroke="#ec9a68"/>
<rect x="533.0" y="90.0" width="1" height="2.5" fill="#5e3024" opacity="0.8"/>
<rect x="530.5" y="90.0" width="2" height="2.5" fill="#f8ae6c" stroke="#e47634"/>
<line x1="534.5" y1="75.2" x2="534.5" y2="92.0" stroke="#ec9a68"/>
<rect x="536.0" y="80.4" width="1" height="8.6" fill="#5e3024" opacity="0.8"/>
<rect x="533.5" y="80.4" width="2" height="8.6" fill="#f8ae6c" stroke="#e47634"/>
<line x1="538.5" y1="75.2" x2="538.5" y2="99.5" stroke="#ec9a68"/>
<rect x="537.5" y="79.5" width="2" height="10.5" fill="#53342e" stroke="#e4703a"/>
<line x1="542.5" y1="80.4" x2="542.5" y2="97.7" stroke="#ec9a68"/>
<rect x="541.5" y="88.0" width="2" height="2.0" fill="#53342e" stroke="#e4703a"/>
<line x1="546.5" y1="75.2" x2="546.5" y2="103.0" stroke="#ec9a68"/>
<rect x="545.5" y="87.9" width="2" height="13.1" fill="#53342e" stroke="#e4703a"/>
<line x1="549.5" y1="94.4" x2="549.5" y2="141.0" stroke="#ec9a68"/>
<rect x="548.5" y="101.0" width="2" height="36.7" fill="#53342e" stroke="#e4703a"/>
<line x1="553.5" y1="124.0" x2="553.5" y2="150.9" stroke="#ec9a68"/>
<rect x="552.5" y="137.0" width="2" height="10.0" fill="#53342e" stroke="#e4703a"/>
<line x1="557.5" y1="144.3" x2="557.5" y2="160.0" stroke="#ec9a68"/>
<rect x="559.0" y="145.6" width="1" height="2.0" fill="#5e3024" opacity="0.8"/>
<rect x="556.5" y="145.6" width="2" height="2.0" fill="#f8ae6c" stroke="#e47634"/>
<line x1="560.5" y1="127.2" x2="560.5" y2="151.5" stroke="#ec9a68"/>
<rect x="562.0" y="133.1" width="1" height="13.9" fill="#5e3024" opacity="0.8"/>
<rect x="559.5" y="133.1" width="2" height="13.9" fill="#f8ae6c" stroke="#e47634"/>
<line x1="564.5" y1="108.9" x2="564.5" y2="134.5" stroke="#ec9a68"/>
<rect x="566.0" y="126.0" width="1" height="5.8" fill="#5e3024" opacity="0.8"/>
<rect x="563.5" y="126.0" width="2" height="5.8" fill="#f8ae6c" stroke="#e47634"/>
<line x1="568.5" y1="110.8" x2="568.5" y2="136.4" stroke="#ec9a68"/>
<rect x="570.0" y="122.0" width="1" height="2.0" fill="#5e3024" opacity="0.8"/>
<rect x="567.5" y="122.0" width="2" height="2.0" fill="#f8ae6c" stroke="#e47634"/>
<line x1="572.5" y1="110.2" x2="572.5" y2="134.5" stroke="#ec9a68"/>
<rect x="574.0" y="121.3" width="1" height="2.0" fill="#5e3024" opacity="0.8"/>
<rect x="571.5" y="121.3" width="2" height="2.0" fill="#f8ae6c" stroke="#e47634"/>
<line x1="575.5" y1="115.4" x2="575.5" y2="132.5" stroke="#ec9a68"/>
<rect x="577.0" y="120.0" width="1" height="2.0" fill="#5e3024" opacity="0.8"/>
<rect x="574.5" y="120.0" width="2" height="2.0" fill="#f8ae6c" stroke="#e47634"/>
<line x1="579.5" y1="85.9" x2="579.5" y2="129.9" stroke="#ec9a68"/>
<rect x="581.0" y="108.2" width="1" height="9.8" fill="#5e3024" opacity="0.8"/>
<rect x="578.5" y="108.2" width="2" height="9.8" fill="#f8ae6c" stroke="#e47634"/>
<line x1="583.5" y1="99.0" x2="583.5" y2="116.7" stroke="#ec9a68"/>
<rect x="582.5" y="107.6" width="2" height="5.2" fill="#53342e" stroke="#e4703a"/>
<line x1="587.5" y1="100.3" x2="587.5" y2="116.0" stroke="#ec9a68"/>
<rect x="589.0" y="103.6" width="1" height="8.6" fill="#5e3024" opacity="0.8"/>
<rect x="586.5" y="103.6" width="2" height="8.6" fill="#f8ae6c" stroke="#e47634"/>
<line x1="590.5" y1="93.1" x2="590.5" y2="148.0" stroke="#ec9a68"/>
<rect x="589.5" y="102.3" width="2" height="44.7" fill="#53342e" stroke="#e4703a"/>
<line x1="594.5" y1="127.2" x2="594.5" y2="156.0" stroke="#ec9a68"/>
<rect x="596.0" y="142.3" width="1" height="3.3" fill="#5e3024" opacity="0.8"/>
<rect x="593.5" y="142.3" width="2" height="3.3" fill="#f8ae6c" stroke="#e47634"/>
<line x1="598.5" y1="126.1" x2="598.5" y2="143.2" stroke="#ec9a68"/>
<rect x="600.0" y="134.2" width="1" height="6.0" fill="#5e3024" opacity="0.8"/>
<rect x="597.5" y="134.2" width="2" height="6.0" fill="#f8ae6c" stroke="#e47634"/>
<line x1="602.5" y1="127.1" x2="602.5" y2="139.2" stroke="#ec9a68"/>
<rect x="601.5" y="133.2" width="2" height="2.0" fill="#53342e" stroke="#e4703a"/>
<line x1="605.5" y1="128.1" x2="605.5" y2="148.2" stroke="#ec9a68"/>
<rect x="604.5" y="135.2" width="2" height="2.0" fill="#53342e" stroke="#e4703a"/>
<line x1="609.5" y1="133.2" x2="609.5" y2="151.2" stroke="#ec9a68"/>
<rect x="608.5" y="137.2" width="2" height="4.0" fill="#53342e" stroke="#e4703a"/>
<line x1="613.5" y1="120.1" x2="613.5" y2="148.2" stroke="#ec9a68"/>
<rect x="615.0" y="132.1" width="1" height="8.1" fill="#5e3024" opacity="0.8"/>
<rect x="612.5" y="132.1" width="2" height="8.1" fill="#f8ae6c" stroke="#e47634"/>
<line x1="616.5" y1="121.1" x2="616.5" y2="135.2" stroke="#ec9a68"/>
<rect x="618.0" y="124.1" width="1" height="3.5" fill="#5e3024" opacity="0.8"/>
<rect x="615.5" y="124.1" width="2" height="3.5" fill="#f8ae6c" stroke="#e47634"/>
<line x1="620.5" y1="116.1" x2="620.5" y2="132.1" stroke="#ec9a68"/>
<rect x="619.5" y="125.1" width="2" height="2.0" fill="#53342e" stroke="#e4703a"/>
<line x1="624.5" y1="126.0" x2="624.5" y2="144.2" stroke="#ec9a68"/>
<rect x="623.5" y="128.1" width="2" height="7.1" fill="#53342e" stroke="#e4703a"/>
<line x1="628.5" y1="127.0" x2="628.5" y2="143.2" stroke="#ec9a68"/>
<rect x="627.5" y="130.1" width="2" height="6.1" fill="#53342e" stroke="#e4703a"/>
<line x1="631.5" y1="125.1" x2="631.5" y2="140.2" stroke="#ec9a68"/>
<rect x="630.5" y="134.2" width="2" height="2.0" fill="#53342e" stroke="#e4703a"/>
<line x1="635.5" y1="131.6" x2="635.5" y2="148.0" stroke="#ec9a68"/>
<rect x="634.5" y="133.7" width="2" height="12.5" fill="#53342e" stroke="#e4703a"/>
<line x1="639.5" y1="137.2" x2="639.5" y2="147.2" stroke="#ec9a68"/>
<rect x="641.0" y="144.2" width="1" height="2.0" fill="#5e3024" opacity="0.8"/>
<rect x="638.5" y="144.2" width="2" height="2.0" fill="#f8ae6c" stroke="#e47634"/>
<line x1="643.5" y1="136.0" x2="643.5" y2="147.0" stroke="#ec9a68"/>
<rect x="645.0" y="141.2" width="1" height="3.0" fill="#5e3024" opacity="0.8"/>
<rect x="642.5" y="141.2" width="2" height="3.0" fill="#f8ae6c" stroke="#e47634"/>
<line x1="646.5" y1="100.8" x2="646.5" y2="141.0" stroke="#ec9a68"/>
<rect x="648.0" y="110.3" width="1" height="28.7" fill="#5e3024" opacity="0.8"/>
<rect x="645.5" y="110.3" width="2" height="28.7" fill="#f8ae6c" stroke="#e47634"/>
<line x1="650.5" y1="100.8" x2="650.5" y2="120.0" stroke="#ec9a68"/>
<rect x="652.0" y="110.0" width="1" height="4.0" fill="#5e3024" opacity="0.8"/>
<rect x="649.5" y="110.0" width="2" height="4.0" fill="#f8ae6c" stroke="#e47634"/>
<line x1="654.5" y1="103.4" x2="654.5" y2="115.0" stroke="#ec9a68"/>
<rect x="653.5" y="109.5" width="2" height="2.0" fill="#53342e" stroke="#e4703a"/>
<line x1="657.5" y1="104.3" x2="657.5" y2="128.0" stroke="#ec9a68"/>
<rect x="659.0" y="110.3" width="1" height="15.7" fill="#5e3024" opacity="0.8"/>
<rect x="656.5" y="110.3" width="2" height="15.7" fill="#f8ae6c" stroke="#e47634"/>
<line x1="661.5" y1="110.0" x2="661.5" y2="126.0" stroke="#ec9a68"/>
<rect x="660.5" y="115.0" width="2" height="3.0" fill="#53342e" stroke="#e4703a"/>
<line x1="665.5" y1="112.0" x2="665.5" y2="131.0" stroke="#ec9a68"/>
<rect x="664.5" y="115.5" width="2" height="13.9" fill="#53342e" stroke="#e4703a"/>
<line x1="669.5" y1="121.0" x2="669.5" y2="140.9" stroke="#ec9a68"/>
<rect x="668.5" y="123.0" width="2" height="11.7" fill="#53342e" stroke="#e4703a"/>
<line x1="672.5" y1="126.0" x2="672.5" y2="141.5" stroke="#ec9a68"/>
<rect x="671.5" y="128.5" width="2" height="6.2" fill="#53342e" stroke="#e4703a"/>
<line x1="676.5" y1="126.0" x2="676.5" y2="137.8" stroke="#ec9a68"/>
<rect x="675.5" y="130.4" width="2" height="3.6" fill="#53342e" stroke="#e4703a"/>
<line x1="680.5" y1="124.8" x2="680.5" y2="169.9" stroke="#ec9a68"/>
<rect x="679.5" y="128.5" width="2" height="27.8" fill="#53342e" stroke="#e4703a"/>
<line x1="684.5" y1="147.0" x2="684.5" y2="161.9" stroke="#ec9a68"/>
<rect x="686.0" y="156.3" width="1" height="4.3" fill="#5e3024" opacity="0.8"/>
<rect x="683.5" y="156.3" width="2" height="4.3" fill="#f8ae6c" stroke="#e47634"/>
<line x1="687.5" y1="144.0" x2="687.5" y2="161.9" stroke="#ec9a68"/>
<rect x="686.5" y="153.2" width="2" height="6.2" fill="#53342e" stroke="#e4703a"/>
<line x1="691.5" y1="150.0" x2="691.5" y2="174.8" stroke="#ec9a68"/>
<rect x="690.5" y="152.0" width="2" height="22.2" fill="#53342e" stroke="#e4703a"/>
<line x1="695.5" y1="155.0" x2="695.5" y2="181.0" stroke="#ec9a68"/>
<rect x="697.0" y="165.6" width="1" height="7.4" fill="#5e3024" opacity="0.8"/>
<rect x="694.5" y="165.6" width="2" height="7.4" fill="#f8ae6c" stroke="#e47634"/>
<line x1="698.5" y1="160.0" x2="698.5" y2="181.6" stroke="#ec9a68"/>
<rect x="700.0" y="164.3" width="1" height="3.7" fill="#5e3024" opacity="0.8"/>
<rect x="697.5" y="164.3" width="2" height="3.7" fill="#f8ae6c" stroke="#e47634"/>
<line x1="702.5" y1="145.8" x2="702.5" y2="176.7" stroke="#ec9a68"/>
<rect x="704.0" y="156.3" width="1" height="11.7" fill="#5e3024" opacity="0.8"/>
<rect x="701.5" y="156.3" width="2" height="11.7" fill="#f8ae6c" stroke="#e47634"/>
<line x1="706.5" y1="147.7" x2="706.5" y2="166.8" stroke="#ec9a68"/>
<rect x="705.5" y="155.0" width="2" height="8.0" fill="#53342e" stroke="#e4703a"/>
<line x1="710.5" y1="152.0" x2="710.5" y2="166.0" stroke="#ec9a68"/>
<rect x="712.0" y="159.4" width="1" height="2.0" fill="#5e3024" opacity="0.8"/>
<rect x="709.5" y="159.4" width="2" height="2.0" fill="#f8ae6c" stroke="#e47634"/>
<line x1="713.5" y1="150.7" x2="713.5" y2="163.0" stroke="#ec9a68"/>
<rect x="715.0" y="156.3" width="1" height="2.0" fill="#5e3024" opacity="0.8"/>
<rect x="712.5" y="156.3" width="2" height="2.0" fill="#f8ae6c" stroke="#e47634"/>
<line x1="717.5" y1="141.5" x2="717.5" y2="157.5" stroke="#ec9a68"/>
<rect x="719.0" y="150.0" width="1" height="5.7" fill="#5e3024" opacity="0.8"/>
<rect x="716.5" y="150.0" width="2" height="5.7" fill="#f8ae6c" stroke="#e47634"/>
<line x1="721.5" y1="132.2" x2="721.5" y2="150.7" stroke="#ec9a68"/>
<rect x="723.0" y="136.5" width="1" height="9.9" fill="#5e3024" opacity="0.8"/>
<rect x="720.5" y="136.5" width="2" height="9.9" fill="#f8ae6c" stroke="#e47634"/>
<line x1="725.5" y1="121.0" x2="725.5" y2="138.4" stroke="#ec9a68"/>
<rect x="727.0" y="135.3" width="1" height="2.0" fill="#5e3024" opacity="0.8"/>
<rect x="724.5" y="135.3" width="2" height="2.0" fill="#f8ae6c" stroke="#e47634"/>
<line x1="728.5" y1="124.8" x2="728.5" y2="136.5" stroke="#ec9a68"/>
<rect x="730.0" y="128.0" width="1" height="5.5" fill="#5e3024" opacity="0.8"/>
<rect x="727.5" y="128.0" width="2" height="5.5" fill="#f8ae6c" stroke="#e47634"/>
<line x1="732.5" y1="126.0" x2="732.5" y2="136.5" stroke="#ec9a68"/>
<rect x="731.5" y="128.0" width="2" height="2.4" fill="#53342e" stroke="#e4703a"/>
<line x1="736.5" y1="121.0" x2="736.5" y2="139.6" stroke="#ec9a68"/>
<rect x="735.5" y="130.4" width="2" height="6.1" fill="#53342e" stroke="#e4703a"/>
<line x1="740.5" y1="132.2" x2="740.5" y2="145.8" stroke="#ec9a68"/>
<rect x="742.0" y="135.3" width="1" height="2.0" fill="#5e3024" opacity="0.8"/>
<rect x="739.5" y="135.3" width="2" height="2.0" fill="#f8ae6c" stroke="#e47634"/>
<line x1="743.5" y1="124.2" x2="743.5" y2="139.0" stroke="#ec9a68"/>
<rect x="742.5" y="135.3" width="2" height="2.0" fill="#53342e" stroke="#e4703a"/>
<line x1="747.5" y1="116.2" x2="747.5" y2="142.7" stroke="#ec9a68"/>
<rect x="749.0" y="138.5" width="1" height="2.0" fill="#5e3024" opacity="0.8"/>
<rect x="746.5" y="138.5" width="2" height="2.0" fill="#f8ae6c" stroke="#e47634"/>
<line x1="751.5" y1="129.0" x2="751.5" y2="137.8" stroke="#ec9a68"/>
<rect x="750.5" y="132.8" width="2" height="3.2" fill="#53342e" stroke="#e4703a"/>
<line x1="754.5" y1="128.5" x2="754.5" y2="139.0" stroke="#ec9a68"/>
<rect x="753.5" y="135.3" width="2" height="2.0" fill="#53342e" stroke="#e4703a"/>
<line x1="758.5" y1="131.0" x2="758.5" y2="147.0" stroke="#ec9a68"/>
<rect x="760.0" y="138.0" width="1" height="2.0" fill="#5e3024" opacity="0.8"/>
<rect x="757.5" y="138.0" width="2" height="2.0" fill="#f8ae6c" stroke="#e47634"/>
<line x1="762.5" y1="127.3" x2="762.5" y2="144.0" stroke="#ec9a68"/>
<rect x="761.5" y="134.0" width="2" height="2.0" fill="#53342e" stroke="#e4703a"/>
<line x1="766.5" y1="127.9" x2="766.5" y2="139.6" stroke="#ec9a68"/>
<rect x="765.5" y="132.8" width="2" height="5.6" fill="#53342e" stroke="#e4703a"/>
<line x1="769.5" y1="135.3" x2="769.5" y2="157.5" stroke="#ec9a68"/>
<rect x="768.5" y="138.4" width="2" height="6.2" fill="#53342e" stroke="#e4703a"/>
<line x1="773.5" y1="141.6" x2="773.5" y2="153.8" stroke="#ec9a68"/>
<rect x="772.5" y="142.7" width="2" height="10.5" fill="#53342e" stroke="#e4703a"/>
<line x1="777.5" y1="142.0" x2="777.5" y2="154.4" stroke="#ec9a68"/>
<rect x="779.0" y="147.0" width="1" height="5.6" fill="#5e3024" opacity="0.8"/>
<rect x="776.5" y="147.0" width="2" height="5.6" fill="#f8ae6c" stroke="#e47634"/>
<line x1="781.5" y1="135.0" x2="781.5" y2="147.0" stroke="#ec9a68"/>
<rect x="783.0" y="138.0" width="1" height="6.0" fill="#5e3024" opacity="0.8"/>
<rect x="780.5" y="138.0" width="2" height="6.0" fill="#f8ae6c" stroke="#e47634"/>
<line x1="784.5" y1="134.0" x2="784.5" y2="142.0" stroke="#ec9a68"/>
<rect x="786.0" y="138.0" width="1" height="2.0" fill="#5e3024" opacity="0.8"/>
<rect x="783.5" y="138.0" width="2" height="2.0" fill="#f8ae6c" stroke="#e47634"/>
<line x1="788.5" y1="121.0" x2="788.5" y2="139.0" stroke="#ec9a68"/>
<rect x="790.0" y="129.3" width="1" height="7.7" fill="#5e3024" opacity="0.8"/>
<rect x="787.5" y="129.3" width="2" height="7.7" fill="#f8ae6c" stroke="#e47634"/>
<line x1="792.5" y1="91.0" x2="792.5" y2="129.0" stroke="#ec9a68"/>
<rect x="794.0" y="101.5" width="1" height="25.7" fill="#5e3024" opacity="0.8"/>
<rect x="791.5" y="101.5" width="2" height="25.7" fill="#f8ae6c" stroke="#e47634"/>
<line x1="795.5" y1="88.3" x2="795.5" y2="107.8" stroke="#ec9a68"/>
<rect x="797.0" y="93.2" width="1" height="6.2" fill="#5e3024" opacity="0.8"/>
<rect x="794.5" y="93.2" width="2" height="6.2" fill="#f8ae6c" stroke="#e47634"/>
<line x1="799.5" y1="73.0" x2="799.5" y2="105.7" stroke="#ec9a68"/>
<rect x="801.0" y="83.5" width="1" height="8.3" fill="#5e3024" opacity="0.8"/>
<rect x="798.5" y="83.5" width="2" height="8.3" fill="#f8ae6c" stroke="#e47634"/>
<line x1="803.5" y1="75.0" x2="803.5" y2="84.9" stroke="#ec9a68"/>
<rect x="805.0" y="81.0" width="1" height="2.0" fill="#5e3024" opacity="0.8"/>
<rect x="802.5" y="81.0" width="2" height="2.0" fill="#f8ae6c" stroke="#e47634"/>
</g>
<polyline points="15.0,88.6 17.0,88.7 19.0,88.9 21.0,89.0 23.0,89.1 25.0,89.2 27.0,89.4 29.0,89.5 31.0,89.6 33.0,89.8 35.0,89.9 37.0,90.2 39.0,90.4 41.0,90.7 43.0,91.0 45.0,91.3 47.0,91.5 49.0,91.8 51.0,92.0 53.0,92.2 55.0,92.3 57.0,92.4 59.0,92.4 61.0,92.4 63.0,92.4 65.0,92.4 67.0,92.4 69.0,92.4 71.0,92.4 73.0,92.3 75.0,92.3 77.0,92.2 79.0,92.1 81.0,92.0 83.0,91.8 85.0,91.6 87.0,91.3 89.0,91.0 91.0,90.7 93.0,90.3 95.0,89.9 97.0,89.5 99.0,89.2 101.0,88.8 103.0,88.5 105.0,88.3 107.0,88.3 109.0,88.4 111.0,88.6 113.0,88.9 115.0,89.3 117.0,89.7 119.0,90.2 121.0,90.7 123.0,91.2 125.0,91.6 127.0,92.0 129.0,92.4 131.0,92.8 133.0,93.2 135.0,93.7 137.0,94.1 139.0,94.5 141.0,94.9 143.0,95.3 145.0,95.6 147.0,96.0 149.0,96.2 151.0,96.5 153.0,96.7 155.0,96.8 157.0,97.0 159.0,97.1 161.0,97.3 163.0,97.5 165.0,97.8 167.0,98.2 169.0,98.7 171.0,99.4 173.0,100.1 175.0,101.0 177.0,102.0 179.0,103.1 181.0,104.2 183.0,105.3 185.0,106.5 187.0,107.6 189.0,108.6 191.0,109.7 193.0,110.7 195.0,111.8 197.0,112.9 199.0,114.0 201.0,115.2 203.0,116.5 205.0,117.8 207.0,119.2 209.0,120.8 211.0,122.3 213.0,123.8 215.0,125.2 217.0,126.5 219.0,127.7 221.0,128.9 223.0,130.0 225.0,131.0 227.0,132.0 229.0,132.9 231.0,133.8 233.0,134.8 235.0,135.7 237.0,136.6 239.0,137.4 241.0,138.3 243.0,139.1 245.0,139.8 247.0,140.5 249.0,141.2 251.0,141.8 253.0,142.4 255.0,143.0 257.0,143.6 259.0,144.2 261.0,144.8 263.0,145.4 265.0,146.0 267.0,146.6 269.0,147.2 271.0,147.8 273.0,148.4 275.0,148.9 277.0,149.4 279.0,149.8 281.0,150.2 283.0,150.6 285.0,150.9 287.0,151.1 289.0,151.4 291.0,151.6 293.0,151.7 295.0,151.9 297.0,152.1 299.0,152.2 301.0,152.3 303.0,152.4 305.0,152.5 307.0,152.6 309.0,152.6 311.0,152.6 313.0,152.6 315.0,152.6 317.0,152.6 319.0,152.6 321.0,152.6 323.0,152.6 325.0,152.6 327.0,152.6 329.0,152.6 331.0,152.6 333.0,152.6 335.0,152.6 337.0,152.5 339.0,152.5 341.0,152.4 343.0,152.4 345.0,152.3 347.0,152.2 349.0,152.1 351.0,151.9 353.0,151.8 355.0,151.7 357.0,151.6 359.0,151.5 361.0,151.4 363.0,151.4 365.0,151.4 367.0,151.5 369.0,151.6 371.0,151.8 373.0,152.2 375.0,152.6 377.0,153.0 379.0,153.6 381.0,154.2 383.0,154.8 385.0,155.4 387.0,156.1 389.0,156.7 391.0,157.4 393.0,158.1 395.0,158.9 397.0,159.7 399.0,160.7 401.0,161.7 403.0,162.8 405.0,163.9 407.0,165.0 409.0,166.2 411.0,167.3 413.0,168.3 415.0,169.3 417.0,170.2 419.0,171.1 421.0,172.0 423.0,172.9 425.0,173.9 427.0,175.0 429.0,176.1 431.0,177.3 433.0,178.5 435.0,179.6 437.0,180.7 439.0,181.7 441.0,182.7 443.0,183.5 445.0,184.3 447.0,185.0 449.0,185.5 451.0,186.0 453.0,186.5 455.0,186.9 457.0,187.3 459.0,187.7 461.0,188.0 463.0,188.2 465.0,188.3 467.0,188.4 469.0,188.3 471.0,188.1 473.0,187.7 475.0,187.2 477.0,186.6 479.0,185.9 481.0,185.1 483.0,184.3 485.0,183.3 487.0,182.3 489.0,181.3 491.0,180.3 493.0,179.2 495.0,178.2 497.0,177.1 499.0,175.9 501.0,174.7 503.0,173.5 505.0,172.3 507.0,171.0 509.0,169.7 511.0,168.3 513.0,166.9 515.0,165.5 517.0,164.1 519.0,162.6 521.0,161.2 523.0,159.7 525.0,158.2 527.0,156.7 529.0,155.3 531.0,153.8 533.0,152.4 535.0,151.0 537.0,149.7 539.0,148.5 541.0,147.5 543.0,146.6 545.0,146.0 547.0,145.4 549.0,145.0 551.0,144.7 553.0,144.6 555.0,144.5 557.0,144.4 559.0,144.3 561.0,144.1 563.0,143.9 565.0,143.7 567.0,143.4 569.0,143.0 571.0,142.7 573.0,142.3 575.0,141.9 577.0,141.5 579.0,141.0 581.0,140.6 583.0,140.1 585.0,139.7 587.0,139.3 589.0,139.0 591.0,138.7 593.0,138.5 595.0,138.3 597.0,138.1 599.0,138.1 601.0,138.0 603.0,138.0 605.0,138.0 607.0,138.0 609.0,138.0 611.0,138.0 613.0,138.0 615.0,137.9 617.0,137.9 619.0,137.9 621.0,137.8 623.0,137.8 625.0,137.7 627.0,137.7 629.0,137.6 631.0,137.6 633.0,137.5 635.0,137.4 637.0,137.2 639.0,137.1 641.0,136.9 643.0,136.6 645.0,136.4 647.0,136.1 649.0,135.8 651.0,135.5 653.0,135.3 655.0,135.1 657.0,134.9 659.0,134.8 661.0,134.7 663.0,134.7 665.0,134.7 667.0,134.7 669.0,134.7 671.0,134.7 673.0,134.7 675.0,134.8 677.0,134.9 679.0,135.1 681.0,135.3 683.0,135.5 685.0,135.8 687.0,136.2 689.0,136.6 691.0,137.0 693.0,137.5 695.0,138.0 697.0,138.6 699.0,139.1 701.0,139.6 703.0,140.0 705.0,140.5 707.0,140.9 709.0,141.3 711.0,141.6 713.0,141.8 715.0,142.0 717.0,142.1 719.0,142.2 721.0,142.2 723.0,142.2 725.0,142.2 727.0,142.0 729.0,141.9 731.0,141.7 733.0,141.5 735.0,141.4 737.0,141.2 739.0,141.1 741.0,141.0 743.0,140.9 745.0,140.7 747.0,140.7 749.0,140.6 751.0,140.5 753.0,140.4 755.0,140.4 757.0,140.3 759.0,140.3 761.0,140.3 763.0,140.2 765.0,140.2 767.0,140.2 769.0,140.2 771.0,140.2 773.0,140.2 775.0,140.2 777.0,140.2 779.0,140.2 781.0,140.3 783.0,140.2 785.0,139.9 787.0,139.6 789.0,139.1 791.0,138.6 793.0,137.9 795.0,137.0 797.0,136.1 799.0,135.0 801.0,133.9 803.0,132.8" fill="none" stroke="#b02628" stroke-width="1.35" stroke-linejoin="round"/>
<polyline points="15.0,95.0 17.0,95.0 19.0,95.0 21.0,95.0 23.0,95.1 25.0,95.3 27.0,95.4 29.0,95.7 31.0,96.0 33.0,96.3 35.0,96.7 37.0,97.1 39.0,97.4 41.0,97.7 43.0,98.0 45.0,98.2 47.0,98.4 49.0,98.5 51.0,98.6 53.0,98.6 55.0,98.6 57.0,98.6 59.0,98.5 61.0,98.4 63.0,98.3 65.0,98.2 67.0,98.1 69.0,98.0 71.0,98.0 73.0,97.8 75.0,97.7 77.0,97.5 79.0,97.2 81.0,96.9 83.0,96.5 85.0,96.1 87.0,95.5 89.0,94.8 91.0,94.0 93.0,93.0 95.0,91.9 97.0,90.7 99.0,89.6 101.0,88.7 103.0,88.1 105.0,87.8 107.0,87.8 109.0,88.2 111.0,88.9 113.0,89.6 115.0,90.3 117.0,90.9 119.0,91.5 121.0,92.1 123.0,92.8 125.0,93.5 127.0,94.2 129.0,94.9 131.0,95.7 133.0,96.5 135.0,97.3 137.0,98.1 139.0,98.9 141.0,99.8 143.0,100.7 145.0,101.5 147.0,102.3 149.0,103.0 151.0,103.5 153.0,103.9 155.0,104.0 157.0,104.0 159.0,104.0 161.0,103.9 163.0,103.9 165.0,104.3 167.0,104.9 169.0,105.8 171.0,107.0 173.0,108.6 175.0,110.5 177.0,112.6 179.0,114.7 181.0,117.0 183.0,119.5 185.0,122.1 187.0,124.6 189.0,127.1 191.0,129.4 193.0,131.6 195.0,133.6 197.0,135.2 199.0,136.6 201.0,138.2 203.0,140.0 205.0,141.9 207.0,144.0 209.0,146.2 211.0,148.6 213.0,151.1 215.0,153.5 217.0,155.7 219.0,157.7 221.0,159.4 223.0,161.0 225.0,162.2 227.0,163.3 229.0,164.1 231.0,165.0 233.0,165.7 235.0,166.5 237.0,167.2 239.0,167.9 241.0,168.5 243.0,169.1 245.0,169.7 247.0,170.2 249.0,170.6 251.0,170.8 253.0,170.6 255.0,170.3 257.0,170.1 259.0,169.8 261.0,169.5 263.0,169.2 265.0,169.2 267.0,169.4 269.0,169.8 271.0,170.0 273.0,170.2 275.0,170.2 277.0,170.1 279.0,170.0 281.0,169.7 283.0,169.3 285.0,168.9 287.0,168.4 289.0,168.0 291.0,167.6 293.0,167.2 295.0,166.8 297.0,166.5 299.0,166.3 301.0,166.1 303.0,166.0 305.0,165.9 307.0,165.7 309.0,165.5 311.0,165.2 313.0,164.9 315.0,164.5 317.0,164.1 319.0,163.7 321.0,163.2 323.0,162.8 325.0,162.4 327.0,162.0 329.0,161.7 331.0,161.4 333.0,161.1 335.0,160.8 337.0,160.3 339.0,159.7 341.0,158.9 343.0,158.0 345.0,156.9 347.0,155.9 349.0,154.8 351.0,154.0 353.0,153.3 355.0,152.7 357.0,152.4 359.0,152.2 361.0,152.0 363.0,151.9 365.0,151.9 367.0,152.1 369.0,152.3 371.0,152.8 373.0,153.5 375.0,154.4 377.0,155.5 379.0,156.8 381.0,158.3 383.0,160.0 385.0,161.7 387.0,163.5 389.0,165.2 391.0,166.9 393.0,168.7 395.0,170.4 397.0,172.2 399.0,174.1 401.0,176.1 403.0,178.2 405.0,180.3 407.0,182.2 409.0,184.0 411.0,185.4 413.0,186.6 415.0,187.7 417.0,188.7 419.0,189.8 421.0,191.0 423.0,192.5 425.0,194.2 427.0,195.9 429.0,197.6 431.0,199.3 433.0,201.0 435.0,202.7 437.0,204.3 439.0,205.9 441.0,207.5 443.0,209.0 445.0,210.5 447.0,211.6 449.0,212.4 451.0,212.8 453.0,213.0 455.0,213.0 457.0,212.8 459.0,212.4 461.0,211.8 463.0,210.9 465.0,209.9 467.0,208.4 469.0,206.6 471.0,204.4 473.0,201.8 475.0,199.0 477.0,196.1 479.0,193.1 481.0,190.1 483.0,187.0 485.0,183.9 487.0,181.0 489.0,178.3 491.0,175.6 493.0,173.2 495.0,170.8 497.0,168.5 499.0,166.1 501.0,163.5 503.0,160.9 505.0,158.1 507.0,155.3 509.0,152.5 511.0,149.8 513.0,147.2 515.0,144.7 517.0,142.3 519.0,140.0 521.0,137.8 523.0,135.6 525.0,133.5 527.0,131.5 529.0,129.5 531.0,127.6 533.0,125.7 535.0,123.9 537.0,122.3 539.0,120.9 541.0,119.7 543.0,118.9 545.0,118.5 547.0,118.6 549.0,119.0 551.0,119.6 553.0,120.5 555.0,121.5 557.0,122.4 559.0,123.1 561.0,123.6 563.0,123.9 565.0,124.1 567.0,124.1 569.0,123.9 571.0,123.6 573.0,123.2 575.0,122.7 577.0,122.2 579.0,121.7 581.0,121.2 583.0,121.0 585.0,121.0 587.0,121.2 589.0,121.6 591.0,122.2 593.0,123.0 595.0,123.8 597.0,124.6 599.0,125.3 601.0,126.0 603.0,126.5 605.0,127.1 607.0,127.6 609.0,128.1 611.0,128.5 613.0,128.8 615.0,129.1 617.0,129.4 619.0,129.6 621.0,129.9 623.0,130.1 625.0,130.4 627.0,130.7 629.0,131.0 631.0,131.4 633.0,131.7 635.0,132.0 637.0,132.2 639.0,132.1 641.0,131.9 643.0,131.6 645.0,131.1 647.0,130.5 649.0,129.9 651.0,129.2 653.0,128.6 655.0,128.1 657.0,127.7 659.0,127.4 661.0,127.2 663.0,127.1 665.0,127.1 667.0,127.2 669.0,127.5 671.0,127.8 673.0,128.1 675.0,128.6 677.0,129.3 679.0,130.2 681.0,131.2 683.0,132.4 685.0,133.8 687.0,135.3 689.0,137.0 691.0,138.6 693.0,140.1 695.0,141.6 697.0,142.9 699.0,144.0 701.0,144.9 703.0,145.6 705.0,146.2 707.0,146.7 709.0,147.1 711.0,147.4 713.0,147.5 715.0,147.5 717.0,147.4 719.0,147.1 721.0,146.7 723.0,146.2 725.0,145.7 727.0,145.1 729.0,144.5 731.0,144.0 733.0,143.5 735.0,143.0 737.0,142.6 739.0,142.3 741.0,142.0 743.0,141.7 745.0,141.4 747.0,141.1 749.0,140.8 751.0,140.5 753.0,140.2 755.0,139.9 757.0,139.6 759.0,139.4 761.0,139.2 763.0,139.1 765.0,139.1 767.0,139.1 769.0,139.2 771.0,139.4 773.0,139.7 775.0,139.9 777.0,140.1 779.0,140.1 781.0,140.0 783.0,139.8 785.0,139.2 787.0,138.2 789.0,137.0 791.0,135.6 793.0,133.9 795.0,132.1 797.0,130.0 799.0,127.9 801.0,125.8 803.0,123.8" fill="none" stroke="#1616b4" stroke-width="1.35" stroke-linejoin="round"/>
<line x1="16" y1="75" x2="899" y2="75" stroke="#b0282c" stroke-width="2"/>
<line x1="16" y1="81.5" x2="899" y2="81.5" stroke="#e4e4e4" stroke-width="1"/>
<line x1="16" y1="148.5" x2="899" y2="148.5" stroke="#107a10"/>
<line x1="16" y1="149.5" x2="899" y2="149.5" stroke="#56d456"/>
<line x1="16.5" y1="298" x2="16.5" y2="301.9" stroke="#d83030" stroke-width="1.2" stroke-dasharray="2.5 1"/>
<line x1="20.5" y1="298" x2="20.5" y2="300.8" stroke="#d83030" stroke-width="1.2" stroke-dasharray="2.5 1"/>
<line x1="23.5" y1="298" x2="23.5" y2="300.4" stroke="#d83030" stroke-width="1.2" stroke-dasharray="2.5 1"/>
<line x1="27.5" y1="298" x2="27.5" y2="299.9" stroke="#d83030" stroke-width="1.2" stroke-dasharray="2.5 1"/>
<line x1="31.5" y1="298" x2="31.5" y2="299.4" stroke="#d83030" stroke-width="1.2" stroke-dasharray="2.5 1"/>
<line x1="35.5" y1="298" x2="35.5" y2="299.0" stroke="#d83030" stroke-width="1.2" stroke-dasharray="2.5 1"/>
<line x1="94.5" y1="298" x2="94.5" y2="296.3" stroke="#d83030" stroke-width="1.2" stroke-dasharray="2.5 1"/>
<line x1="98.5" y1="298" x2="98.5" y2="295.3" stroke="#d83030" stroke-width="1.2" stroke-dasharray="2.5 1"/>
<line x1="102.5" y1="298" x2="102.5" y2="295.4" stroke="#d83030" stroke-width="1.2" stroke-dasharray="2.5 1"/>
<line x1="105.5" y1="298" x2="105.5" y2="296.0" stroke="#d83030" stroke-width="1.2" stroke-dasharray="2.5 1"/>
<line x1="109.5" y1="298" x2="109.5" y2="296.7" stroke="#d83030" stroke-width="1.2" stroke-dasharray="2.5 1"/>
<line x1="117.5" y1="298" x2="117.5" y2="298.9" stroke="#d83030" stroke-width="1.2" stroke-dasharray="2.5 1"/>
<line x1="120.5" y1="298" x2="120.5" y2="300.5" stroke="#d83030" stroke-width="1.2" stroke-dasharray="2.5 1"/>
<line x1="124.5" y1="298" x2="124.5" y2="302.0" stroke="#d83030" stroke-width="1.2" stroke-dasharray="2.5 1"/>
<line x1="128.5" y1="298" x2="128.5" y2="301.9" stroke="#d83030" stroke-width="1.2" stroke-dasharray="2.5 1"/>
<line x1="132.5" y1="298" x2="132.5" y2="301.7" stroke="#d83030" stroke-width="1.2" stroke-dasharray="2.5 1"/>
<line x1="135.5" y1="298" x2="135.5" y2="301.5" stroke="#d83030" stroke-width="1.2" stroke-dasharray="2.5 1"/>
<line x1="139.5" y1="298" x2="139.5" y2="301.6" stroke="#d83030" stroke-width="1.2" stroke-dasharray="2.5 1"/>
<line x1="143.5" y1="298" x2="143.5" y2="301.7" stroke="#d83030" stroke-width="1.2" stroke-dasharray="2.5 1"/>
<line x1="146.5" y1="298" x2="146.5" y2="301.8" stroke="#d83030" stroke-width="1.2" stroke-dasharray="2.5 1"/>
<line x1="150.5" y1="298" x2="150.5" y2="300.9" stroke="#d83030" stroke-width="1.2" stroke-dasharray="2.5 1"/>
<line x1="154.5" y1="298" x2="154.5" y2="300.3" stroke="#d83030" stroke-width="1.2" stroke-dasharray="2.5 1"/>
<line x1="158.5" y1="298" x2="158.5" y2="299.6" stroke="#d83030" stroke-width="1.2" stroke-dasharray="2.5 1"/>
<line x1="161.5" y1="298" x2="161.5" y2="299.2" stroke="#d83030" stroke-width="1.2" stroke-dasharray="2.5 1"/>
<line x1="165.5" y1="298" x2="165.5" y2="298.9" stroke="#d83030" stroke-width="1.2" stroke-dasharray="2.5 1"/>
<line x1="176.5" y1="298" x2="176.5" y2="299.3" stroke="#d83030" stroke-width="1.2" stroke-dasharray="2.5 1"/>
<line x1="180.5" y1="298" x2="180.5" y2="300.5" stroke="#d83030" stroke-width="1.2" stroke-dasharray="2.5 1"/>
<line x1="184.5" y1="298" x2="184.5" y2="301.2" stroke="#d83030" stroke-width="1.2" stroke-dasharray="2.5 1"/>
<line x1="187.5" y1="298" x2="187.5" y2="302.7" stroke="#d83030" stroke-width="1.2" stroke-dasharray="2.5 1"/>
<line x1="191.5" y1="298" x2="191.5" y2="304.3" stroke="#d83030" stroke-width="1.2" stroke-dasharray="2.5 1"/>
<line x1="195.5" y1="298" x2="195.5" y2="303.5" stroke="#d83030" stroke-width="1.2" stroke-dasharray="2.5 1"/>
<line x1="199.5" y1="298" x2="199.5" y2="302.4" stroke="#d83030" stroke-width="1.2" stroke-dasharray="2.5 1"/>
<line x1="202.5" y1="298" x2="202.5" y2="301.4" stroke="#d83030" stroke-width="1.2" stroke-dasharray="2.5 1"/>
<line x1="206.5" y1="298" x2="206.5" y2="301.0" stroke="#d83030" stroke-width="1.2" stroke-dasharray="2.5 1"/>
<line x1="210.5" y1="298" x2="210.5" y2="301.5" stroke="#d83030" stroke-width="1.2" stroke-dasharray="2.5 1"/>
<line x1="214.5" y1="298" x2="214.5" y2="302.0" stroke="#d83030" stroke-width="1.2" stroke-dasharray="2.5 1"/>
<line x1="217.5" y1="298" x2="217.5" y2="302.5" stroke="#d83030" stroke-width="1.2" stroke-dasharray="2.5 1"/>
<line x1="221.5" y1="298" x2="221.5" y2="302.0" stroke="#d83030" stroke-width="1.2" stroke-dasharray="2.5 1"/>
<line x1="225.5" y1="298" x2="225.5" y2="301.7" stroke="#d83030" stroke-width="1.2" stroke-dasharray="2.5 1"/>
<line x1="229.5" y1="298" x2="229.5" y2="299.9" stroke="#d83030" stroke-width="1.2" stroke-dasharray="2.5 1"/>
<line x1="240.5" y1="298" x2="240.5" y2="296.4" stroke="#d83030" stroke-width="1.2" stroke-dasharray="2.5 1"/>
<line x1="243.5" y1="298" x2="243.5" y2="295.6" stroke="#d83030" stroke-width="1.2" stroke-dasharray="2.5 1"/>
<line x1="247.5" y1="298" x2="247.5" y2="294.9" stroke="#d83030" stroke-width="1.2" stroke-dasharray="2.5 1"/>
<line x1="251.5" y1="298" x2="251.5" y2="294.4" stroke="#d83030" stroke-width="1.2" stroke-dasharray="2.5 1"/>
<line x1="255.5" y1="298" x2="255.5" y2="293.8" stroke="#d83030" stroke-width="1.2" stroke-dasharray="2.5 1"/>
<line x1="258.5" y1="298" x2="258.5" y2="293.5" stroke="#d83030" stroke-width="1.2" stroke-dasharray="2.5 1"/>
<line x1="262.5" y1="298" x2="262.5" y2="294.3" stroke="#d83030" stroke-width="1.2" stroke-dasharray="2.5 1"/>
<line x1="266.5" y1="298" x2="266.5" y2="295.0" stroke="#d83030" stroke-width="1.2" stroke-dasharray="2.5 1"/>
<line x1="270.5" y1="298" x2="270.5" y2="295.7" stroke="#d83030" stroke-width="1.2" stroke-dasharray="2.5 1"/>
<line x1="273.5" y1="298" x2="273.5" y2="295.9" stroke="#d83030" stroke-width="1.2" stroke-dasharray="2.5 1"/>
<line x1="277.5" y1="298" x2="277.5" y2="296.2" stroke="#d83030" stroke-width="1.2" stroke-dasharray="2.5 1"/>
<line x1="281.5" y1="298" x2="281.5" y2="296.2" stroke="#d83030" stroke-width="1.2" stroke-dasharray="2.5 1"/>
<line x1="284.5" y1="298" x2="284.5" y2="295.5" stroke="#d83030" stroke-width="1.2" stroke-dasharray="2.5 1"/>
<line x1="288.5" y1="298" x2="288.5" y2="294.8" stroke="#d83030" stroke-width="1.2" stroke-dasharray="2.5 1"/>
<line x1="292.5" y1="298" x2="292.5" y2="294.7" stroke="#d83030" stroke-width="1.2" stroke-dasharray="2.5 1"/>
<line x1="296.5" y1="298" x2="296.5" y2="295.1" stroke="#d83030" stroke-width="1.2" stroke-dasharray="2.5 1"/>
<line x1="299.5" y1="298" x2="299.5" y2="295.7" stroke="#d83030" stroke-width="1.2" stroke-dasharray="2.5 1"/>
<line x1="303.5" y1="298" x2="303.5" y2="296.0" stroke="#d83030" stroke-width="1.2" stroke-dasharray="2.5 1"/>
<line x1="307.5" y1="298" x2="307.5" y2="296.3" stroke="#d83030" stroke-width="1.2" stroke-dasharray="2.5 1"/>
<line x1="311.5" y1="298" x2="311.5" y2="296.6" stroke="#d83030" stroke-width="1.2" stroke-dasharray="2.5 1"/>
<line x1="314.5" y1="298" x2="314.5" y2="296.9" stroke="#d83030" stroke-width="1.2" stroke-dasharray="2.5 1"/>
<line x1="318.5" y1="298" x2="318.5" y2="297.2" stroke="#d83030" stroke-width="1.2" stroke-dasharray="2.5 1"/>
<line x1="322.5" y1="298" x2="322.5" y2="297.0" stroke="#d83030" stroke-width="1.2" stroke-dasharray="2.5 1"/>
<line x1="325.5" y1="298" x2="325.5" y2="296.5" stroke="#d83030" stroke-width="1.2" stroke-dasharray="2.5 1"/>
<line x1="329.5" y1="298" x2="329.5" y2="296.0" stroke="#d83030" stroke-width="1.2" stroke-dasharray="2.5 1"/>
<line x1="333.5" y1="298" x2="333.5" y2="296.0" stroke="#d83030" stroke-width="1.2" stroke-dasharray="2.5 1"/>
<line x1="337.5" y1="298" x2="337.5" y2="296.1" stroke="#d83030" stroke-width="1.2" stroke-dasharray="2.5 1"/>
<line x1="340.5" y1="298" x2="340.5" y2="296.1" stroke="#d83030" stroke-width="1.2" stroke-dasharray="2.5 1"/>
<line x1="344.5" y1="298" x2="344.5" y2="296.3" stroke="#d83030" stroke-width="1.2" stroke-dasharray="2.5 1"/>
<line x1="348.5" y1="298" x2="348.5" y2="296.5" stroke="#d83030" stroke-width="1.2" stroke-dasharray="2.5 1"/>
<line x1="352.5" y1="298" x2="352.5" y2="296.7" stroke="#d83030" stroke-width="1.2" stroke-dasharray="2.5 1"/>
<line x1="355.5" y1="298" x2="355.5" y2="297.0" stroke="#d83030" stroke-width="1.2" stroke-dasharray="2.5 1"/>
<line x1="367.5" y1="298" x2="367.5" y2="299.7" stroke="#d83030" stroke-width="1.2" stroke-dasharray="2.5 1"/>
<line x1="370.5" y1="298" x2="370.5" y2="300.2" stroke="#d83030" stroke-width="1.2" stroke-dasharray="2.5 1"/>
<line x1="374.5" y1="298" x2="374.5" y2="300.7" stroke="#d83030" stroke-width="1.2" stroke-dasharray="2.5 1"/>
<line x1="378.5" y1="298" x2="378.5" y2="302.1" stroke="#d83030" stroke-width="1.2" stroke-dasharray="2.5 1"/>
<line x1="381.5" y1="298" x2="381.5" y2="303.7" stroke="#d83030" stroke-width="1.2" stroke-dasharray="2.5 1"/>
<line x1="385.5" y1="298" x2="385.5" y2="304.9" stroke="#d83030" stroke-width="1.2" stroke-dasharray="2.5 1"/>
<line x1="389.5" y1="298" x2="389.5" y2="304.0" stroke="#d83030" stroke-width="1.2" stroke-dasharray="2.5 1"/>
<line x1="393.5" y1="298" x2="393.5" y2="303.2" stroke="#d83030" stroke-width="1.2" stroke-dasharray="2.5 1"/>
<line x1="396.5" y1="298" x2="396.5" y2="303.1" stroke="#d83030" stroke-width="1.2" stroke-dasharray="2.5 1"/>
<line x1="400.5" y1="298" x2="400.5" y2="303.6" stroke="#d83030" stroke-width="1.2" stroke-dasharray="2.5 1"/>
<line x1="404.5" y1="298" x2="404.5" y2="304.2" stroke="#d83030" stroke-width="1.2" stroke-dasharray="2.5 1"/>
<line x1="408.5" y1="298" x2="408.5" y2="304.7" stroke="#d83030" stroke-width="1.2" stroke-dasharray="2.5 1"/>
<line x1="411.5" y1="298" x2="411.5" y2="304.1" stroke="#d83030" stroke-width="1.2" stroke-dasharray="2.5 1"/>
<line x1="415.5" y1="298" x2="415.5" y2="302.3" stroke="#d83030" stroke-width="1.2" stroke-dasharray="2.5 1"/>
<line x1="419.5" y1="298" x2="419.5" y2="300.5" stroke="#d83030" stroke-width="1.2" stroke-dasharray="2.5 1"/>
<line x1="422.5" y1="298" x2="422.5" y2="300.3" stroke="#d83030" stroke-width="1.2" stroke-dasharray="2.5 1"/>
<line x1="426.5" y1="298" x2="426.5" y2="300.5" stroke="#d83030" stroke-width="1.2" stroke-dasharray="2.5 1"/>
<line x1="430.5" y1="298" x2="430.5" y2="300.5" stroke="#d83030" stroke-width="1.2" stroke-dasharray="2.5 1"/>
<line x1="434.5" y1="298" x2="434.5" y2="301.0" stroke="#d83030" stroke-width="1.2" stroke-dasharray="2.5 1"/>
<line x1="437.5" y1="298" x2="437.5" y2="301.4" stroke="#d83030" stroke-width="1.2" stroke-dasharray="2.5 1"/>
<line x1="441.5" y1="298" x2="441.5" y2="301.4" stroke="#d83030" stroke-width="1.2" stroke-dasharray="2.5 1"/>
<line x1="445.5" y1="298" x2="445.5" y2="300.7" stroke="#d83030" stroke-width="1.2" stroke-dasharray="2.5 1"/>
<line x1="449.5" y1="298" x2="449.5" y2="300.0" stroke="#d83030" stroke-width="1.2" stroke-dasharray="2.5 1"/>
<line x1="452.5" y1="298" x2="452.5" y2="299.0" stroke="#d83030" stroke-width="1.2" stroke-dasharray="2.5 1"/>
<line x1="460.5" y1="298" x2="460.5" y2="296.8" stroke="#d83030" stroke-width="1.2" stroke-dasharray="2.5 1"/>
<line x1="464.5" y1="298" x2="464.5" y2="295.7" stroke="#d83030" stroke-width="1.2" stroke-dasharray="2.5 1"/>
<line x1="467.5" y1="298" x2="467.5" y2="294.4" stroke="#d83030" stroke-width="1.2" stroke-dasharray="2.5 1"/>
<line x1="471.5" y1="298" x2="471.5" y2="293.0" stroke="#d83030" stroke-width="1.2" stroke-dasharray="2.5 1"/>
<line x1="475.5" y1="298" x2="475.5" y2="291.6" stroke="#d83030" stroke-width="1.2" stroke-dasharray="2.5 1"/>
<line x1="478.5" y1="298" x2="478.5" y2="289.7" stroke="#d83030" stroke-width="1.2" stroke-dasharray="2.5 1"/>
<line x1="482.5" y1="298" x2="482.5" y2="287.9" stroke="#d83030" stroke-width="1.2" stroke-dasharray="2.5 1"/>
<line x1="486.5" y1="298" x2="486.5" y2="287.8" stroke="#d83030" stroke-width="1.2" stroke-dasharray="2.5 1"/>
<line x1="490.5" y1="298" x2="490.5" y2="288.0" stroke="#d83030" stroke-width="1.2" stroke-dasharray="2.5 1"/>
<line x1="493.5" y1="298" x2="493.5" y2="288.4" stroke="#d83030" stroke-width="1.2" stroke-dasharray="2.5 1"/>
<line x1="497.5" y1="298" x2="497.5" y2="289.5" stroke="#d83030" stroke-width="1.2" stroke-dasharray="2.5 1"/>
<line x1="501.5" y1="298" x2="501.5" y2="290.7" stroke="#d83030" stroke-width="1.2" stroke-dasharray="2.5 1"/>
<line x1="505.5" y1="298" x2="505.5" y2="291.6" stroke="#d83030" stroke-width="1.2" stroke-dasharray="2.5 1"/>
<line x1="508.5" y1="298" x2="508.5" y2="292.5" stroke="#d83030" stroke-width="1.2" stroke-dasharray="2.5 1"/>
<line x1="512.5" y1="298" x2="512.5" y2="293.3" stroke="#d83030" stroke-width="1.2" stroke-dasharray="2.5 1"/>
<line x1="516.5" y1="298" x2="516.5" y2="294.1" stroke="#d83030" stroke-width="1.2" stroke-dasharray="2.5 1"/>
<line x1="519.5" y1="298" x2="519.5" y2="294.9" stroke="#d83030" stroke-width="1.2" stroke-dasharray="2.5 1"/>
<line x1="523.5" y1="298" x2="523.5" y2="295.2" stroke="#d83030" stroke-width="1.2" stroke-dasharray="2.5 1"/>
<line x1="527.5" y1="298" x2="527.5" y2="295.8" stroke="#d83030" stroke-width="1.2" stroke-dasharray="2.5 1"/>
<line x1="531.5" y1="298" x2="531.5" y2="296.4" stroke="#d83030" stroke-width="1.2" stroke-dasharray="2.5 1"/>
<line x1="534.5" y1="298" x2="534.5" y2="296.5" stroke="#d83030" stroke-width="1.2" stroke-dasharray="2.5 1"/>
<line x1="538.5" y1="298" x2="538.5" y2="296.9" stroke="#d83030" stroke-width="1.2" stroke-dasharray="2.5 1"/>
<line x1="549.5" y1="298" x2="549.5" y2="302.0" stroke="#d83030" stroke-width="1.2" stroke-dasharray="2.5 1"/>
<line x1="553.5" y1="298" x2="553.5" y2="303.7" stroke="#d83030" stroke-width="1.2" stroke-dasharray="2.5 1"/>
<line x1="557.5" y1="298" x2="557.5" y2="305.2" stroke="#d83030" stroke-width="1.2" stroke-dasharray="2.5 1"/>
<line x1="560.5" y1="298" x2="560.5" y2="306.2" stroke="#d83030" stroke-width="1.2" stroke-dasharray="2.5 1"/>
<line x1="564.5" y1="298" x2="564.5" y2="306.0" stroke="#d83030" stroke-width="1.2" stroke-dasharray="2.5 1"/>
<line x1="568.5" y1="298" x2="568.5" y2="305.2" stroke="#d83030" stroke-width="1.2" stroke-dasharray="2.5 1"/>
<line x1="572.5" y1="298" x2="572.5" y2="304.7" stroke="#d83030" stroke-width="1.2" stroke-dasharray="2.5 1"/>
<line x1="575.5" y1="298" x2="575.5" y2="304.0" stroke="#d83030" stroke-width="1.2" stroke-dasharray="2.5 1"/>
<line x1="579.5" y1="298" x2="579.5" y2="302.1" stroke="#d83030" stroke-width="1.2" stroke-dasharray="2.5 1"/>
<line x1="583.5" y1="298" x2="583.5" y2="301.4" stroke="#d83030" stroke-width="1.2" stroke-dasharray="2.5 1"/>
<line x1="587.5" y1="298" x2="587.5" y2="300.8" stroke="#d83030" stroke-width="1.2" stroke-dasharray="2.5 1"/>
<line x1="590.5" y1="298" x2="590.5" y2="300.4" stroke="#d83030" stroke-width="1.2" stroke-dasharray="2.5 1"/>
<line x1="594.5" y1="298" x2="594.5" y2="300.9" stroke="#d83030" stroke-width="1.2" stroke-dasharray="2.5 1"/>
<line x1="598.5" y1="298" x2="598.5" y2="301.3" stroke="#d83030" stroke-width="1.2" stroke-dasharray="2.5 1"/>
<line x1="602.5" y1="298" x2="602.5" y2="301.4" stroke="#d83030" stroke-width="1.2" stroke-dasharray="2.5 1"/>
<line x1="605.5" y1="298" x2="605.5" y2="301.2" stroke="#d83030" stroke-width="1.2" stroke-dasharray="2.5 1"/>
<line x1="609.5" y1="298" x2="609.5" y2="301.0" stroke="#d83030" stroke-width="1.2" stroke-dasharray="2.5 1"/>
<line x1="613.5" y1="298" x2="613.5" y2="300.8" stroke="#d83030" stroke-width="1.2" stroke-dasharray="2.5 1"/>
<line x1="616.5" y1="298" x2="616.5" y2="300.8" stroke="#d83030" stroke-width="1.2" stroke-dasharray="2.5 1"/>
<line x1="620.5" y1="298" x2="620.5" y2="301.0" stroke="#d83030" stroke-width="1.2" stroke-dasharray="2.5 1"/>
<line x1="624.5" y1="298" x2="624.5" y2="301.2" stroke="#d83030" stroke-width="1.2" stroke-dasharray="2.5 1"/>
<line x1="628.5" y1="298" x2="628.5" y2="301.1" stroke="#d83030" stroke-width="1.2" stroke-dasharray="2.5 1"/>
<line x1="631.5" y1="298" x2="631.5" y2="300.9" stroke="#d83030" stroke-width="1.2" stroke-dasharray="2.5 1"/>
<line x1="635.5" y1="298" x2="635.5" y2="300.7" stroke="#d83030" stroke-width="1.2" stroke-dasharray="2.5 1"/>
<line x1="639.5" y1="298" x2="639.5" y2="300.5" stroke="#d83030" stroke-width="1.2" stroke-dasharray="2.5 1"/>
<line x1="643.5" y1="298" x2="643.5" y2="300.3" stroke="#d83030" stroke-width="1.2" stroke-dasharray="2.5 1"/>
<line x1="646.5" y1="298" x2="646.5" y2="299.9" stroke="#d83030" stroke-width="1.2" stroke-dasharray="2.5 1"/>
<line x1="650.5" y1="298" x2="650.5" y2="299.4" stroke="#d83030" stroke-width="1.2" stroke-dasharray="2.5 1"/>
<line x1="654.5" y1="298" x2="654.5" y2="298.8" stroke="#d83030" stroke-width="1.2" stroke-dasharray="2.5 1"/>
<line x1="687.5" y1="298" x2="687.5" y2="299.6" stroke="#d83030" stroke-width="1.2" stroke-dasharray="2.5 1"/>
<line x1="691.5" y1="298" x2="691.5" y2="300.5" stroke="#d83030" stroke-width="1.2" stroke-dasharray="2.5 1"/>
<line x1="695.5" y1="298" x2="695.5" y2="301.2" stroke="#d83030" stroke-width="1.2" stroke-dasharray="2.5 1"/>
<line x1="698.5" y1="298" x2="698.5" y2="301.9" stroke="#d83030" stroke-width="1.2" stroke-dasharray="2.5 1"/>
<line x1="702.5" y1="298" x2="702.5" y2="302.0" stroke="#d83030" stroke-width="1.2" stroke-dasharray="2.5 1"/>
<line x1="706.5" y1="298" x2="706.5" y2="301.9" stroke="#d83030" stroke-width="1.2" stroke-dasharray="2.5 1"/>
<line x1="710.5" y1="298" x2="710.5" y2="301.7" stroke="#d83030" stroke-width="1.2" stroke-dasharray="2.5 1"/>
<line x1="713.5" y1="298" x2="713.5" y2="300.1" stroke="#d83030" stroke-width="1.2" stroke-dasharray="2.5 1"/>
<line x1="717.5" y1="298" x2="717.5" y2="299.2" stroke="#d83030" stroke-width="1.2" stroke-dasharray="2.5 1"/>
<line x1="728.5" y1="298" x2="728.5" y2="297.1" stroke="#d83030" stroke-width="1.2" stroke-dasharray="2.5 1"/>
<line x1="732.5" y1="298" x2="732.5" y2="296.9" stroke="#d83030" stroke-width="1.2" stroke-dasharray="2.5 1"/>
<line x1="736.5" y1="298" x2="736.5" y2="296.6" stroke="#d83030" stroke-width="1.2" stroke-dasharray="2.5 1"/>
<line x1="740.5" y1="298" x2="740.5" y2="296.3" stroke="#d83030" stroke-width="1.2" stroke-dasharray="2.5 1"/>
<line x1="743.5" y1="298" x2="743.5" y2="296.5" stroke="#d83030" stroke-width="1.2" stroke-dasharray="2.5 1"/>
<line x1="747.5" y1="298" x2="747.5" y2="296.8" stroke="#d83030" stroke-width="1.2" stroke-dasharray="2.5 1"/>
<line x1="751.5" y1="298" x2="751.5" y2="297.0" stroke="#d83030" stroke-width="1.2" stroke-dasharray="2.5 1"/>
<line x1="754.5" y1="298" x2="754.5" y2="297.0" stroke="#d83030" stroke-width="1.2" stroke-dasharray="2.5 1"/>
<line x1="758.5" y1="298" x2="758.5" y2="297.1" stroke="#d83030" stroke-width="1.2" stroke-dasharray="2.5 1"/>
<line x1="769.5" y1="298" x2="769.5" y2="298.9" stroke="#d83030" stroke-width="1.2" stroke-dasharray="2.5 1"/>
<line x1="773.5" y1="298" x2="773.5" y2="299.3" stroke="#d83030" stroke-width="1.2" stroke-dasharray="2.5 1"/>
<line x1="777.5" y1="298" x2="777.5" y2="299.5" stroke="#d83030" stroke-width="1.2" stroke-dasharray="2.5 1"/>
<line x1="781.5" y1="298" x2="781.5" y2="299.4" stroke="#d83030" stroke-width="1.2" stroke-dasharray="2.5 1"/>
<line x1="784.5" y1="298" x2="784.5" y2="299.3" stroke="#d83030" stroke-width="1.2" stroke-dasharray="2.5 1"/>
<line x1="788.5" y1="298" x2="788.5" y2="298.9" stroke="#d83030" stroke-width="1.2" stroke-dasharray="2.5 1"/>
<line x1="795.5" y1="298" x2="795.5" y2="296.1" stroke="#d83030" stroke-width="1.2" stroke-dasharray="2.5 1"/>
<line x1="799.5" y1="298" x2="799.5" y2="294.1" stroke="#d83030" stroke-width="1.2" stroke-dasharray="2.5 1"/>
<line x1="803.5" y1="298" x2="803.5" y2="292.4" stroke="#d83030" stroke-width="1.2" stroke-dasharray="2.5 1"/>
<polyline points="15.0,305.3 28.0,304.5 50.0,302.0 90.0,298.0 100.0,293.4 107.0,293.4 115.0,295.4 125.0,301.2 134.0,301.2 148.0,304.6 160.0,302.5 172.0,301.9 185.0,308.0 192.0,313.0 205.0,313.0 218.0,317.8 225.0,317.8 240.0,311.6 258.0,304.6 270.0,304.6 280.0,303.2 290.0,299.0 295.0,298.4 320.0,297.7 330.0,295.3 350.0,293.5 360.0,292.8 375.0,297.0 385.0,304.0 395.0,305.3 410.0,312.3 420.0,308.8 430.0,310.9 440.0,314.2 452.0,313.0 465.0,305.9 475.0,298.0 483.0,288.7 495.0,283.0 510.0,278.2 525.0,276.7 535.0,277.0 545.0,278.2 550.0,284.5 560.0,291.3 565.0,292.8 575.0,294.2 580.0,292.8 590.0,293.5 600.0,297.0 615.0,299.0 625.0,300.5 645.0,301.2 660.0,297.0 680.0,297.7 690.0,301.9 700.0,305.3 710.0,306.7 725.0,300.5 740.0,297.7 760.0,297.0 775.0,299.0 787.0,299.0 795.0,295.6 803.0,289.4" fill="none" stroke="#14146e" stroke-width="1.3"/>
<circle cx="16.4" cy="301.3" r="1.55" fill="#e8242a"/>
<circle cx="20.1" cy="302.2" r="1.55" fill="#e8242a"/>
<circle cx="23.9" cy="302.4" r="1.55" fill="#e8242a"/>
<circle cx="27.6" cy="302.6" r="1.55" fill="#e8242a"/>
<circle cx="31.3" cy="302.7" r="1.55" fill="#e8242a"/>
<circle cx="35.0" cy="302.7" r="1.55" fill="#e8242a"/>
<circle cx="38.8" cy="302.7" r="1.55" fill="#e8242a"/>
<circle cx="42.5" cy="302.7" r="1.55" fill="#e8242a"/>
<circle cx="46.2" cy="302.6" r="1.55" fill="#e8242a"/>
<circle cx="50.0" cy="302.2" r="1.55" fill="#e8242a"/>
<circle cx="53.7" cy="301.8" r="1.55" fill="#e8242a"/>
<circle cx="57.4" cy="301.4" r="1.55" fill="#e8242a"/>
<circle cx="61.2" cy="301.0" r="1.55" fill="#e8242a"/>
<circle cx="64.9" cy="300.6" r="1.55" fill="#e8242a"/>
<circle cx="68.6" cy="300.2" r="1.55" fill="#e8242a"/>
<circle cx="72.3" cy="299.9" r="1.55" fill="#e8242a"/>
<circle cx="76.1" cy="299.7" r="1.55" fill="#e8242a"/>
<circle cx="79.8" cy="299.5" r="1.55" fill="#e8242a"/>
<circle cx="83.5" cy="299.4" r="1.55" fill="#e8242a"/>
<circle cx="87.3" cy="298.9" r="1.55" fill="#e8242a"/>
<circle cx="91.0" cy="298.2" r="1.55" fill="#e8242a"/>
<circle cx="94.7" cy="297.5" r="1.55" fill="#e8242a"/>
<circle cx="98.5" cy="296.8" r="1.55" fill="#e8242a"/>
<circle cx="102.2" cy="296.0" r="1.55" fill="#e8242a"/>
<circle cx="105.9" cy="295.4" r="1.55" fill="#e8242a"/>
<circle cx="109.7" cy="295.4" r="1.55" fill="#e8242a"/>
<circle cx="113.4" cy="295.4" r="1.55" fill="#e8242a"/>
<circle cx="117.1" cy="295.7" r="1.55" fill="#e8242a"/>
<circle cx="120.8" cy="296.3" r="1.55" fill="#e8242a"/>
<circle cx="124.6" cy="296.9" r="1.55" fill="#e8242a"/>
<circle cx="128.3" cy="297.3" r="1.55" fill="#e8242a"/>
<circle cx="132.0" cy="297.5" r="1.55" fill="#e8242a"/>
<circle cx="135.8" cy="298.1" r="1.55" fill="#e8242a"/>
<circle cx="139.5" cy="298.9" r="1.55" fill="#e8242a"/>
<circle cx="143.2" cy="299.7" r="1.55" fill="#e8242a"/>
<circle cx="146.9" cy="300.5" r="1.55" fill="#e8242a"/>
<circle cx="150.7" cy="301.2" r="1.55" fill="#e8242a"/>
<circle cx="154.4" cy="301.2" r="1.55" fill="#e8242a"/>
<circle cx="158.1" cy="301.2" r="1.55" fill="#e8242a"/>
<circle cx="161.9" cy="301.2" r="1.55" fill="#e8242a"/>
<circle cx="165.6" cy="301.3" r="1.55" fill="#e8242a"/>
<circle cx="169.3" cy="301.8" r="1.55" fill="#e8242a"/>
<circle cx="173.1" cy="302.3" r="1.55" fill="#e8242a"/>
<circle cx="176.8" cy="302.8" r="1.55" fill="#e8242a"/>
<circle cx="180.5" cy="303.4" r="1.55" fill="#e8242a"/>
<circle cx="184.2" cy="304.4" r="1.55" fill="#e8242a"/>
<circle cx="188.0" cy="305.4" r="1.55" fill="#e8242a"/>
<circle cx="191.7" cy="306.5" r="1.55" fill="#e8242a"/>
<circle cx="195.4" cy="307.5" r="1.55" fill="#e8242a"/>
<circle cx="199.2" cy="308.6" r="1.55" fill="#e8242a"/>
<circle cx="202.9" cy="309.6" r="1.55" fill="#e8242a"/>
<circle cx="206.6" cy="310.6" r="1.55" fill="#e8242a"/>
<circle cx="210.4" cy="311.5" r="1.55" fill="#e8242a"/>
<circle cx="214.1" cy="312.3" r="1.55" fill="#e8242a"/>
<circle cx="217.8" cy="313.2" r="1.55" fill="#e8242a"/>
<circle cx="221.6" cy="313.8" r="1.55" fill="#e8242a"/>
<circle cx="225.3" cy="314.0" r="1.55" fill="#e8242a"/>
<circle cx="229.0" cy="314.2" r="1.55" fill="#e8242a"/>
<circle cx="232.7" cy="314.3" r="1.55" fill="#e8242a"/>
<circle cx="236.5" cy="313.7" r="1.55" fill="#e8242a"/>
<circle cx="240.2" cy="313.1" r="1.55" fill="#e8242a"/>
<circle cx="243.9" cy="312.5" r="1.55" fill="#e8242a"/>
<circle cx="247.7" cy="311.7" r="1.55" fill="#e8242a"/>
<circle cx="251.4" cy="310.8" r="1.55" fill="#e8242a"/>
<circle cx="255.1" cy="309.9" r="1.55" fill="#e8242a"/>
<circle cx="258.9" cy="309.1" r="1.55" fill="#e8242a"/>
<circle cx="262.6" cy="308.3" r="1.55" fill="#e8242a"/>
<circle cx="266.3" cy="307.6" r="1.55" fill="#e8242a"/>
<circle cx="270.0" cy="306.9" r="1.55" fill="#e8242a"/>
<circle cx="273.8" cy="306.2" r="1.55" fill="#e8242a"/>
<circle cx="277.5" cy="305.4" r="1.55" fill="#e8242a"/>
<circle cx="281.2" cy="304.5" r="1.55" fill="#e8242a"/>
<circle cx="285.0" cy="303.7" r="1.55" fill="#e8242a"/>
<circle cx="288.7" cy="302.8" r="1.55" fill="#e8242a"/>
<circle cx="292.4" cy="302.0" r="1.55" fill="#e8242a"/>
<circle cx="296.1" cy="301.3" r="1.55" fill="#e8242a"/>
<circle cx="299.9" cy="300.5" r="1.55" fill="#e8242a"/>
<circle cx="303.6" cy="300.1" r="1.55" fill="#e8242a"/>
<circle cx="307.3" cy="299.7" r="1.55" fill="#e8242a"/>
<circle cx="311.1" cy="299.3" r="1.55" fill="#e8242a"/>
<circle cx="314.8" cy="298.9" r="1.55" fill="#e8242a"/>
<circle cx="318.5" cy="298.6" r="1.55" fill="#e8242a"/>
<circle cx="322.3" cy="298.2" r="1.55" fill="#e8242a"/>
<circle cx="326.0" cy="297.8" r="1.55" fill="#e8242a"/>
<circle cx="329.7" cy="297.4" r="1.55" fill="#e8242a"/>
<circle cx="333.4" cy="297.0" r="1.55" fill="#e8242a"/>
<circle cx="337.2" cy="296.6" r="1.55" fill="#e8242a"/>
<circle cx="340.9" cy="296.2" r="1.55" fill="#e8242a"/>
<circle cx="344.6" cy="295.7" r="1.55" fill="#e8242a"/>
<circle cx="348.4" cy="295.1" r="1.55" fill="#e8242a"/>
<circle cx="352.1" cy="294.6" r="1.55" fill="#e8242a"/>
<circle cx="355.8" cy="294.1" r="1.55" fill="#e8242a"/>
<circle cx="359.6" cy="293.6" r="1.55" fill="#e8242a"/>
<circle cx="363.3" cy="293.0" r="1.55" fill="#e8242a"/>
<circle cx="367.0" cy="293.1" r="1.55" fill="#e8242a"/>
<circle cx="370.8" cy="293.6" r="1.55" fill="#e8242a"/>
<circle cx="374.5" cy="294.1" r="1.55" fill="#e8242a"/>
<circle cx="378.2" cy="295.1" r="1.55" fill="#e8242a"/>
<circle cx="381.9" cy="296.1" r="1.55" fill="#e8242a"/>
<circle cx="385.7" cy="297.2" r="1.55" fill="#e8242a"/>
<circle cx="389.4" cy="298.5" r="1.55" fill="#e8242a"/>
<circle cx="393.1" cy="299.8" r="1.55" fill="#e8242a"/>
<circle cx="396.9" cy="301.1" r="1.55" fill="#e8242a"/>
<circle cx="400.6" cy="302.3" r="1.55" fill="#e8242a"/>
<circle cx="404.3" cy="303.5" r="1.55" fill="#e8242a"/>
<circle cx="408.1" cy="304.7" r="1.55" fill="#e8242a"/>
<circle cx="411.8" cy="305.5" r="1.55" fill="#e8242a"/>
<circle cx="415.5" cy="306.1" r="1.55" fill="#e8242a"/>
<circle cx="419.2" cy="306.6" r="1.55" fill="#e8242a"/>
<circle cx="423.0" cy="307.1" r="1.55" fill="#e8242a"/>
<circle cx="426.7" cy="307.8" r="1.55" fill="#e8242a"/>
<circle cx="430.4" cy="308.5" r="1.55" fill="#e8242a"/>
<circle cx="434.2" cy="309.3" r="1.55" fill="#e8242a"/>
<circle cx="437.9" cy="310.1" r="1.55" fill="#e8242a"/>
<circle cx="441.6" cy="310.6" r="1.55" fill="#e8242a"/>
<circle cx="445.4" cy="311.0" r="1.55" fill="#e8242a"/>
<circle cx="449.1" cy="311.3" r="1.55" fill="#e8242a"/>
<circle cx="452.8" cy="311.6" r="1.55" fill="#e8242a"/>
<circle cx="456.5" cy="310.7" r="1.55" fill="#e8242a"/>
<circle cx="460.3" cy="309.7" r="1.55" fill="#e8242a"/>
<circle cx="464.0" cy="308.8" r="1.55" fill="#e8242a"/>
<circle cx="467.7" cy="307.4" r="1.55" fill="#e8242a"/>
<circle cx="471.5" cy="305.8" r="1.55" fill="#e8242a"/>
<circle cx="475.2" cy="304.2" r="1.55" fill="#e8242a"/>
<circle cx="478.9" cy="301.7" r="1.55" fill="#e8242a"/>
<circle cx="482.6" cy="299.2" r="1.55" fill="#e8242a"/>
<circle cx="486.4" cy="297.3" r="1.55" fill="#e8242a"/>
<circle cx="490.1" cy="295.4" r="1.55" fill="#e8242a"/>
<circle cx="493.8" cy="293.2" r="1.55" fill="#e8242a"/>
<circle cx="497.6" cy="290.6" r="1.55" fill="#e8242a"/>
<circle cx="501.3" cy="288.3" r="1.55" fill="#e8242a"/>
<circle cx="505.0" cy="286.2" r="1.55" fill="#e8242a"/>
<circle cx="508.8" cy="284.2" r="1.55" fill="#e8242a"/>
<circle cx="512.5" cy="282.7" r="1.55" fill="#e8242a"/>
<circle cx="516.2" cy="281.5" r="1.55" fill="#e8242a"/>
<circle cx="520.0" cy="280.3" r="1.55" fill="#e8242a"/>
<circle cx="523.7" cy="279.6" r="1.55" fill="#e8242a"/>
<circle cx="527.4" cy="279.0" r="1.55" fill="#e8242a"/>
<circle cx="531.1" cy="278.5" r="1.55" fill="#e8242a"/>
<circle cx="534.9" cy="278.5" r="1.55" fill="#e8242a"/>
<circle cx="538.6" cy="278.5" r="1.55" fill="#e8242a"/>
<circle cx="542.3" cy="278.6" r="1.55" fill="#e8242a"/>
<circle cx="546.1" cy="279.4" r="1.55" fill="#e8242a"/>
<circle cx="549.8" cy="280.3" r="1.55" fill="#e8242a"/>
<circle cx="553.5" cy="281.2" r="1.55" fill="#e8242a"/>
<circle cx="557.2" cy="282.2" r="1.55" fill="#e8242a"/>
<circle cx="561.0" cy="283.4" r="1.55" fill="#e8242a"/>
<circle cx="564.7" cy="284.7" r="1.55" fill="#e8242a"/>
<circle cx="568.4" cy="286.1" r="1.55" fill="#e8242a"/>
<circle cx="572.2" cy="287.1" r="1.55" fill="#e8242a"/>
<circle cx="575.9" cy="287.9" r="1.55" fill="#e8242a"/>
<circle cx="579.6" cy="288.8" r="1.55" fill="#e8242a"/>
<circle cx="583.4" cy="289.6" r="1.55" fill="#e8242a"/>
<circle cx="587.1" cy="290.5" r="1.55" fill="#e8242a"/>
<circle cx="590.8" cy="291.4" r="1.55" fill="#e8242a"/>
<circle cx="594.5" cy="292.2" r="1.55" fill="#e8242a"/>
<circle cx="598.3" cy="293.1" r="1.55" fill="#e8242a"/>
<circle cx="602.0" cy="293.9" r="1.55" fill="#e8242a"/>
<circle cx="605.7" cy="294.6" r="1.55" fill="#e8242a"/>
<circle cx="609.5" cy="295.3" r="1.55" fill="#e8242a"/>
<circle cx="613.2" cy="296.0" r="1.55" fill="#e8242a"/>
<circle cx="616.9" cy="296.5" r="1.55" fill="#e8242a"/>
<circle cx="620.7" cy="296.8" r="1.55" fill="#e8242a"/>
<circle cx="624.4" cy="297.2" r="1.55" fill="#e8242a"/>
<circle cx="628.1" cy="297.5" r="1.55" fill="#e8242a"/>
<circle cx="631.9" cy="297.9" r="1.55" fill="#e8242a"/>
<circle cx="635.6" cy="298.2" r="1.55" fill="#e8242a"/>
<circle cx="639.3" cy="298.5" r="1.55" fill="#e8242a"/>
<circle cx="643.0" cy="298.8" r="1.55" fill="#e8242a"/>
<circle cx="646.8" cy="298.8" r="1.55" fill="#e8242a"/>
<circle cx="650.5" cy="298.3" r="1.55" fill="#e8242a"/>
<circle cx="654.2" cy="297.8" r="1.55" fill="#e8242a"/>
<circle cx="658.0" cy="297.6" r="1.55" fill="#e8242a"/>
<circle cx="661.7" cy="297.5" r="1.55" fill="#e8242a"/>
<circle cx="665.4" cy="297.4" r="1.55" fill="#e8242a"/>
<circle cx="669.1" cy="297.3" r="1.55" fill="#e8242a"/>
<circle cx="672.9" cy="297.6" r="1.55" fill="#e8242a"/>
<circle cx="676.6" cy="298.0" r="1.55" fill="#e8242a"/>
<circle cx="680.3" cy="298.5" r="1.55" fill="#e8242a"/>
<circle cx="684.1" cy="298.9" r="1.55" fill="#e8242a"/>
<circle cx="687.8" cy="299.4" r="1.55" fill="#e8242a"/>
<circle cx="691.5" cy="300.0" r="1.55" fill="#e8242a"/>
<circle cx="695.3" cy="300.5" r="1.55" fill="#e8242a"/>
<circle cx="699.0" cy="301.1" r="1.55" fill="#e8242a"/>
<circle cx="702.7" cy="301.7" r="1.55" fill="#e8242a"/>
<circle cx="706.5" cy="302.3" r="1.55" fill="#e8242a"/>
<circle cx="710.2" cy="302.9" r="1.55" fill="#e8242a"/>
<circle cx="713.9" cy="303.0" r="1.55" fill="#e8242a"/>
<circle cx="717.6" cy="302.4" r="1.55" fill="#e8242a"/>
<circle cx="721.4" cy="301.8" r="1.55" fill="#e8242a"/>
<circle cx="725.1" cy="301.2" r="1.55" fill="#e8242a"/>
<circle cx="728.8" cy="300.7" r="1.55" fill="#e8242a"/>
<circle cx="732.6" cy="300.2" r="1.55" fill="#e8242a"/>
<circle cx="736.3" cy="299.8" r="1.55" fill="#e8242a"/>
<circle cx="740.0" cy="299.4" r="1.55" fill="#e8242a"/>
<circle cx="743.8" cy="299.1" r="1.55" fill="#e8242a"/>
<circle cx="747.5" cy="298.7" r="1.55" fill="#e8242a"/>
<circle cx="751.2" cy="298.3" r="1.55" fill="#e8242a"/>
<circle cx="754.9" cy="298.2" r="1.55" fill="#e8242a"/>
<circle cx="758.7" cy="298.0" r="1.55" fill="#e8242a"/>
<circle cx="762.4" cy="297.8" r="1.55" fill="#e8242a"/>
<circle cx="766.1" cy="297.6" r="1.55" fill="#e8242a"/>
<circle cx="769.9" cy="297.4" r="1.55" fill="#e8242a"/>
<circle cx="773.6" cy="297.5" r="1.55" fill="#e8242a"/>
<circle cx="777.3" cy="297.5" r="1.55" fill="#e8242a"/>
<circle cx="781.0" cy="297.6" r="1.55" fill="#e8242a"/>
<circle cx="784.8" cy="297.7" r="1.55" fill="#e8242a"/>
<circle cx="788.5" cy="297.5" r="1.55" fill="#e8242a"/>
<circle cx="792.2" cy="297.2" r="1.55" fill="#e8242a"/>
<circle cx="796.0" cy="296.8" r="1.55" fill="#e8242a"/>
<circle cx="799.7" cy="295.8" r="1.55" fill="#e8242a"/>
<circle cx="803.4" cy="295.0" r="1.55" fill="#e8242a"/>
<line x1="16" y1="337.2" x2="803" y2="337.2" stroke="#1e20a8" stroke-width="1.6"/>
<line x1="16" y1="398.4" x2="803" y2="398.4" stroke="#1e20a8" stroke-width="1.6"/>
<polyline points="16.0,370.0 20.0,367.4 27.0,376.4 31.0,366.0 35.0,367.4 38.0,375.0 43.0,373.0 50.0,374.3 57.0,368.0 65.0,365.3 69.0,368.8 75.0,366.7 80.0,369.4 83.0,357.0 87.0,364.6 91.0,360.4 94.0,349.3 98.0,343.8 103.0,352.8 113.0,380.6 118.0,379.9 122.0,373.0 125.0,373.6 128.0,386.0 132.0,373.6 137.0,375.0 140.0,373.6 147.0,388.9 150.0,369.4 155.0,370.0 163.0,366.0 168.0,369.4 172.0,384.0 175.0,387.5 180.0,384.7 185.0,394.4 190.0,397.2 195.0,380.6 202.0,384.7 210.0,394.4 214.0,397.2 218.0,391.7 222.0,390.3 229.0,373.6 232.0,372.2 237.0,381.2 241.0,376.4 245.0,379.2 250.0,373.6 258.0,362.5 267.0,376.4 270.0,376.4 273.0,369.4 280.0,372.9 285.0,358.3 288.0,356.2 295.0,369.4 300.0,372.2 307.0,365.3 312.0,367.4 315.0,362.5 322.0,360.4 327.0,356.2 330.0,356.2 333.0,359.7 337.0,375.0 342.0,365.3 345.0,350.7 350.0,351.4 353.0,354.2 356.0,362.5 360.0,365.3 363.0,363.9 367.0,373.6 372.0,372.9 378.0,384.7 383.0,385.4 385.0,395.1 389.0,378.5 395.0,387.5 400.0,392.0 405.0,384.0 411.0,375.7 418.0,376.4 421.0,379.0 428.0,385.0 436.0,390.0 444.0,388.0 452.0,379.0 456.0,358.3 461.0,370.0 466.0,368.8 473.0,352.8 478.0,340.3 488.0,340.3 493.0,336.8 498.0,344.4 505.0,338.2 508.0,338.9 512.0,334.0 516.0,343.0 520.0,339.6 524.0,341.7 530.0,339.6 535.0,337.2 538.0,344.4 543.0,343.0 548.0,352.8 550.0,373.6 555.0,378.5 558.0,378.5 565.0,365.3 572.0,365.3 580.0,357.0 585.0,361.8 588.0,355.6 592.0,377.8 598.0,370.8 605.0,373.0 610.0,375.0 616.0,364.6 624.0,373.0 630.0,370.8 632.0,371.5 635.0,377.8 643.0,374.3 646.0,354.9 652.0,354.2 656.0,356.2 658.0,366.0 664.0,364.6 670.0,373.6 676.0,368.8 680.0,384.7 685.0,386.8 687.0,380.6 691.0,391.7 696.0,384.7 699.0,386.0 703.0,376.4 707.0,380.6 713.0,375.0 720.0,363.2 725.0,360.4 729.0,356.2 735.0,362.5 737.0,364.6 743.0,362.5 747.0,361.1 752.0,363.9 755.0,365.3 759.0,364.6 762.0,361.4 766.0,365.3 773.0,380.6 778.0,373.0 785.0,363.9 790.0,354.2 792.0,343.0 794.0,337.2 800.0,331.2 803.0,329.2" fill="none" stroke="#f0902c" stroke-width="1" clip-path="url(#cr)"/>
<clipPath id="ctop"><rect x="16" y="320" width="883" height="17"/></clipPath>
<polyline points="16.0,370.0 20.0,367.4 27.0,376.4 31.0,366.0 35.0,367.4 38.0,375.0 43.0,373.0 50.0,374.3 57.0,368.0 65.0,365.3 69.0,368.8 75.0,366.7 80.0,369.4 83.0,357.0 87.0,364.6 91.0,360.4 94.0,349.3 98.0,343.8 103.0,352.8 113.0,380.6 118.0,379.9 122.0,373.0 125.0,373.6 128.0,386.0 132.0,373.6 137.0,375.0 140.0,373.6 147.0,388.9 150.0,369.4 155.0,370.0 163.0,366.0 168.0,369.4 172.0,384.0 175.0,387.5 180.0,384.7 185.0,394.4 190.0,397.2 195.0,380.6 202.0,384.7 210.0,394.4 214.0,397.2 218.0,391.7 222.0,390.3 229.0,373.6 232.0,372.2 237.0,381.2 241.0,376.4 245.0,379.2 250.0,373.6 258.0,362.5 267.0,376.4 270.0,376.4 273.0,369.4 280.0,372.9 285.0,358.3 288.0,356.2 295.0,369.4 300.0,372.2 307.0,365.3 312.0,367.4 315.0,362.5 322.0,360.4 327.0,356.2 330.0,356.2 333.0,359.7 337.0,375.0 342.0,365.3 345.0,350.7 350.0,351.4 353.0,354.2 356.0,362.5 360.0,365.3 363.0,363.9 367.0,373.6 372.0,372.9 378.0,384.7 383.0,385.4 385.0,395.1 389.0,378.5 395.0,387.5 400.0,392.0 405.0,384.0 411.0,375.7 418.0,376.4 421.0,379.0 428.0,385.0 436.0,390.0 444.0,388.0 452.0,379.0 456.0,358.3 461.0,370.0 466.0,368.8 473.0,352.8 478.0,340.3 488.0,340.3 493.0,336.8 498.0,344.4 505.0,338.2 508.0,338.9 512.0,334.0 516.0,343.0 520.0,339.6 524.0,341.7 530.0,339.6 535.0,337.2 538.0,344.4 543.0,343.0 548.0,352.8 550.0,373.6 555.0,378.5 558.0,378.5 565.0,365.3 572.0,365.3 580.0,357.0 585.0,361.8 588.0,355.6 592.0,377.8 598.0,370.8 605.0,373.0 610.0,375.0 616.0,364.6 624.0,373.0 630.0,370.8 632.0,371.5 635.0,377.8 643.0,374.3 646.0,354.9 652.0,354.2 656.0,356.2 658.0,366.0 664.0,364.6 670.0,373.6 676.0,368.8 680.0,384.7 685.0,386.8 687.0,380.6 691.0,391.7 696.0,384.7 699.0,386.0 703.0,376.4 707.0,380.6 713.0,375.0 720.0,363.2 725.0,360.4 729.0,356.2 735.0,362.5 737.0,364.6 743.0,362.5 747.0,361.1 752.0,363.9 755.0,365.3 759.0,364.6 762.0,361.4 766.0,365.3 773.0,380.6 778.0,373.0 785.0,363.9 790.0,354.2 792.0,343.0 794.0,337.2 800.0,331.2 803.0,329.2" fill="none" stroke="#c23ad6" stroke-width="1.1" clip-path="url(#ctop)"/>
<clipPath id="cbot"><rect x="16" y="396.5" width="883" height="6"/></clipPath>
<polyline points="16.0,370.0 20.0,367.4 27.0,376.4 31.0,366.0 35.0,367.4 38.0,375.0 43.0,373.0 50.0,374.3 57.0,368.0 65.0,365.3 69.0,368.8 75.0,366.7 80.0,369.4 83.0,357.0 87.0,364.6 91.0,360.4 94.0,349.3 98.0,343.8 103.0,352.8 113.0,380.6 118.0,379.9 122.0,373.0 125.0,373.6 128.0,386.0 132.0,373.6 137.0,375.0 140.0,373.6 147.0,388.9 150.0,369.4 155.0,370.0 163.0,366.0 168.0,369.4 172.0,384.0 175.0,387.5 180.0,384.7 185.0,394.4 190.0,397.2 195.0,380.6 202.0,384.7 210.0,394.4 214.0,397.2 218.0,391.7 222.0,390.3 229.0,373.6 232.0,372.2 237.0,381.2 241.0,376.4 245.0,379.2 250.0,373.6 258.0,362.5 267.0,376.4 270.0,376.4 273.0,369.4 280.0,372.9 285.0,358.3 288.0,356.2 295.0,369.4 300.0,372.2 307.0,365.3 312.0,367.4 315.0,362.5 322.0,360.4 327.0,356.2 330.0,356.2 333.0,359.7 337.0,375.0 342.0,365.3 345.0,350.7 350.0,351.4 353.0,354.2 356.0,362.5 360.0,365.3 363.0,363.9 367.0,373.6 372.0,372.9 378.0,384.7 383.0,385.4 385.0,395.1 389.0,378.5 395.0,387.5 400.0,392.0 405.0,384.0 411.0,375.7 418.0,376.4 421.0,379.0 428.0,385.0 436.0,390.0 444.0,388.0 452.0,379.0 456.0,358.3 461.0,370.0 466.0,368.8 473.0,352.8 478.0,340.3 488.0,340.3 493.0,336.8 498.0,344.4 505.0,338.2 508.0,338.9 512.0,334.0 516.0,343.0 520.0,339.6 524.0,341.7 530.0,339.6 535.0,337.2 538.0,344.4 543.0,343.0 548.0,352.8 550.0,373.6 555.0,378.5 558.0,378.5 565.0,365.3 572.0,365.3 580.0,357.0 585.0,361.8 588.0,355.6 592.0,377.8 598.0,370.8 605.0,373.0 610.0,375.0 616.0,364.6 624.0,373.0 630.0,370.8 632.0,371.5 635.0,377.8 643.0,374.3 646.0,354.9 652.0,354.2 656.0,356.2 658.0,366.0 664.0,364.6 670.0,373.6 676.0,368.8 680.0,384.7 685.0,386.8 687.0,380.6 691.0,391.7 696.0,384.7 699.0,386.0 703.0,376.4 707.0,380.6 713.0,375.0 720.0,363.2 725.0,360.4 729.0,356.2 735.0,362.5 737.0,364.6 743.0,362.5 747.0,361.1 752.0,363.9 755.0,365.3 759.0,364.6 762.0,361.4 766.0,365.3 773.0,380.6 778.0,373.0 785.0,363.9 790.0,354.2 792.0,343.0 794.0,337.2 800.0,331.2 803.0,329.2" fill="none" stroke="#30d040" stroke-width="1.1" clip-path="url(#cbot)"/>
<rect x="15.5" y="38.5" width="884" height="231.0" fill="none" stroke="#a9bccb"/>
<rect x="15.5" y="275.5" width="884" height="45.0" fill="none" stroke="#a9bccb"/>
<rect x="15.5" y="326.5" width="884" height="76.0" fill="none" stroke="#a9bccb"/>
<line x1="899" y1="58.5" x2="904" y2="58.5" stroke="#a9bccb"/>
<line x1="899" y1="110.5" x2="904" y2="110.5" stroke="#a9bccb"/>
<line x1="899" y1="162.5" x2="904" y2="162.5" stroke="#a9bccb"/>
<line x1="899" y1="214.5" x2="904" y2="214.5" stroke="#a9bccb"/>
<line x1="899" y1="298.5" x2="904" y2="298.5" stroke="#a9bccb"/>
<line x1="899" y1="352.5" x2="904" y2="352.5" stroke="#a9bccb"/>
<line x1="24.5" y1="402" x2="24.5" y2="406" stroke="#a9bccb"/>
<line x1="46.5" y1="402" x2="46.5" y2="406" stroke="#a9bccb"/>
<line x1="68.5" y1="402" x2="68.5" y2="406" stroke="#a9bccb"/>
<line x1="91.5" y1="402" x2="91.5" y2="406" stroke="#a9bccb"/>
<line x1="113.5" y1="402" x2="113.5" y2="406" stroke="#a9bccb"/>
<line x1="135.5" y1="402" x2="135.5" y2="406" stroke="#a9bccb"/>
<line x1="158.5" y1="402" x2="158.5" y2="406" stroke="#a9bccb"/>
<line x1="180.5" y1="402" x2="180.5" y2="406" stroke="#a9bccb"/>
<line x1="202.5" y1="402" x2="202.5" y2="406" stroke="#a9bccb"/>
<line x1="225.5" y1="402" x2="225.5" y2="406" stroke="#a9bccb"/>
<line x1="247.5" y1="402" x2="247.5" y2="406" stroke="#a9bccb"/>
<line x1="270.5" y1="402" x2="270.5" y2="406" stroke="#a9bccb"/>
<line x1="292.5" y1="402" x2="292.5" y2="406" stroke="#a9bccb"/>
<line x1="314.5" y1="402" x2="314.5" y2="406" stroke="#a9bccb"/>
<line x1="337.5" y1="402" x2="337.5" y2="406" stroke="#a9bccb"/>
<line x1="352.5" y1="402" x2="352.5" y2="406" stroke="#a9bccb"/>
<line x1="375.5" y1="402" x2="375.5" y2="406" stroke="#a9bccb"/>
<line x1="397.5" y1="402" x2="397.5" y2="406" stroke="#a9bccb"/>
<line x1="419.5" y1="402" x2="419.5" y2="406" stroke="#a9bccb"/>
<line x1="441.5" y1="402" x2="441.5" y2="406" stroke="#a9bccb"/>
<line x1="464.5" y1="402" x2="464.5" y2="406" stroke="#a9bccb"/>
<line x1="486.5" y1="402" x2="486.5" y2="406" stroke="#a9bccb"/>
<line x1="508.5" y1="402" x2="508.5" y2="406" stroke="#a9bccb"/>
<line x1="531.5" y1="402" x2="531.5" y2="406" stroke="#a9bccb"/>
<line x1="553.5" y1="402" x2="553.5" y2="406" stroke="#a9bccb"/>
<line x1="575.5" y1="402" x2="575.5" y2="406" stroke="#a9bccb"/>
<line x1="598.5" y1="402" x2="598.5" y2="406" stroke="#a9bccb"/>
<line x1="620.5" y1="402" x2="620.5" y2="406" stroke="#a9bccb"/>
<line x1="643.5" y1="402" x2="643.5" y2="406" stroke="#a9bccb"/>
<line x1="665.5" y1="402" x2="665.5" y2="406" stroke="#a9bccb"/>
<line x1="687.5" y1="402" x2="687.5" y2="406" stroke="#a9bccb"/>
<line x1="710.5" y1="402" x2="710.5" y2="406" stroke="#a9bccb"/>
<line x1="732.5" y1="402" x2="732.5" y2="406" stroke="#a9bccb"/>
<line x1="754.5" y1="402" x2="754.5" y2="406" stroke="#a9bccb"/>
<line x1="777.5" y1="402" x2="777.5" y2="406" stroke="#a9bccb"/>
<line x1="799.5" y1="402" x2="799.5" y2="406" stroke="#a9bccb"/>
<line x1="822.5" y1="402" x2="822.5" y2="406" stroke="#a9bccb"/>
<line x1="844.5" y1="402" x2="844.5" y2="406" stroke="#a9bccb"/>
<line x1="866.5" y1="402" x2="866.5" y2="406" stroke="#a9bccb"/>
<line x1="890.5" y1="402" x2="890.5" y2="406" stroke="#a9bccb"/>
<line x1="16" y1="378" x2="16" y2="406" stroke="#cfe6ea" stroke-width="2"/>
<line x1="397" y1="378" x2="397" y2="406" stroke="#cfe6ea" stroke-width="2"/>
<line x1="890" y1="378" x2="890" y2="406" stroke="#cfe6ea" stroke-width="2"/>
<text x="906" y="64.5" font-family="Liberation Sans, sans-serif" font-size="11" fill="#f4f4f4">104.50</text>
<text x="906" y="116.5" font-family="Liberation Sans, sans-serif" font-size="11" fill="#f4f4f4">104.00</text>
<text x="906" y="168.5" font-family="Liberation Sans, sans-serif" font-size="11" fill="#f4f4f4">103.50</text>
<text x="906" y="220.5" font-family="Liberation Sans, sans-serif" font-size="11" fill="#f4f4f4">103.00</text>
<rect x="899" y="71" width="48" height="21" fill="#fdfdfd"/>
<text x="908" y="85" font-family="Liberation Sans, sans-serif" font-size="11" fill="#3a3456">104.28</text>
<text x="907" y="305" font-family="Liberation Sans, sans-serif" font-size="11" fill="#f4f4f4">+0.0</text>
<text x="906" y="359" font-family="Liberation Sans, sans-serif" font-size="11" fill="#f4f4f4">60</text>
<text x="23.7" y="425" font-family="Liberation Sans, sans-serif" font-size="11" fill="#f4f4f4" text-anchor="middle">7</text>
<text x="45.7" y="425" font-family="Liberation Sans, sans-serif" font-size="11" fill="#f4f4f4" text-anchor="middle">8</text>
<text x="67.7" y="425" font-family="Liberation Sans, sans-serif" font-size="11" fill="#f4f4f4" text-anchor="middle">9</text>
<text x="90.7" y="425" font-family="Liberation Sans, sans-serif" font-size="11" fill="#f4f4f4" text-anchor="middle">10</text>
<text x="112.7" y="425" font-family="Liberation Sans, sans-serif" font-size="11" fill="#f4f4f4" text-anchor="middle">11</text>
<text x="134.7" y="425" font-family="Liberation Sans, sans-serif" font-size="11" fill="#f4f4f4" text-anchor="middle">14</text>
<text x="157.5" y="425" font-family="Liberation Sans, sans-serif" font-size="11" fill="#f4f4f4" text-anchor="middle">15</text>
<text x="179.8" y="425" font-family="Liberation Sans, sans-serif" font-size="11" fill="#f4f4f4" text-anchor="middle">16</text>
<text x="202.0" y="425" font-family="Liberation Sans, sans-serif" font-size="11" fill="#f4f4f4" text-anchor="middle">17</text>
<text x="224.2" y="425" font-family="Liberation Sans, sans-serif" font-size="11" fill="#f4f4f4" text-anchor="middle">18</text>
<text x="246.4" y="425" font-family="Liberation Sans, sans-serif" font-size="11" fill="#f4f4f4" text-anchor="middle">21</text>
<text x="269.2" y="425" font-family="Liberation Sans, sans-serif" font-size="11" fill="#f4f4f4" text-anchor="middle">22</text>
<text x="291.4" y="425" font-family="Liberation Sans, sans-serif" font-size="11" fill="#f4f4f4" text-anchor="middle">23</text>
<text x="313.6" y="425" font-family="Liberation Sans, sans-serif" font-size="11" fill="#f4f4f4" text-anchor="middle">24</text>
<text x="336.7" y="425" font-family="Liberation Sans, sans-serif" font-size="11" fill="#f4f4f4" text-anchor="middle">28</text>
<text x="351.4" y="425" font-family="Liberation Sans, sans-serif" font-size="11" fill="#f4f4f4" text-anchor="middle">29</text>
<text x="374.2" y="425" font-family="Liberation Sans, sans-serif" font-size="11" fill="#f4f4f4" text-anchor="middle">30</text>
<text x="396.2" y="425" font-family="Liberation Sans, sans-serif" font-size="11" fill="#f4f4f4" text-anchor="middle">4</text>
<text x="418.6" y="425" font-family="Liberation Sans, sans-serif" font-size="11" fill="#f4f4f4" text-anchor="middle">5</text>
<text x="440.9" y="425" font-family="Liberation Sans, sans-serif" font-size="11" fill="#f4f4f4" text-anchor="middle">6</text>
<text x="463.9" y="425" font-family="Liberation Sans, sans-serif" font-size="11" fill="#f4f4f4" text-anchor="middle">7</text>
<text x="485.6" y="425" font-family="Liberation Sans, sans-serif" font-size="11" fill="#f4f4f4" text-anchor="middle">8</text>
<text x="507.5" y="425" font-family="Liberation Sans, sans-serif" font-size="11" fill="#f4f4f4" text-anchor="middle">11</text>
<text x="530.6" y="425" font-family="Liberation Sans, sans-serif" font-size="11" fill="#f4f4f4" text-anchor="middle">12</text>
<text x="552.8" y="425" font-family="Liberation Sans, sans-serif" font-size="11" fill="#f4f4f4" text-anchor="middle">13</text>
<text x="575.0" y="425" font-family="Liberation Sans, sans-serif" font-size="11" fill="#f4f4f4" text-anchor="middle">14</text>
<text x="597.2" y="425" font-family="Liberation Sans, sans-serif" font-size="11" fill="#f4f4f4" text-anchor="middle">15</text>
<text x="619.2" y="425" font-family="Liberation Sans, sans-serif" font-size="11" fill="#f4f4f4" text-anchor="middle">18</text>
<text x="642.5" y="425" font-family="Liberation Sans, sans-serif" font-size="11" fill="#f4f4f4" text-anchor="middle">19</text>
<text x="664.8" y="425" font-family="Liberation Sans, sans-serif" font-size="11" fill="#f4f4f4" text-anchor="middle">20</text>
<text x="686.7" y="425" font-family="Liberation Sans, sans-serif" font-size="11" fill="#f4f4f4" text-anchor="middle">21</text>
<text x="709.2" y="425" font-family="Liberation Sans, sans-serif" font-size="11" fill="#f4f4f4" text-anchor="middle">22</text>
<text x="731.4" y="425" font-family="Liberation Sans, sans-serif" font-size="11" fill="#f4f4f4" text-anchor="middle">25</text>
<text x="753.6" y="425" font-family="Liberation Sans, sans-serif" font-size="11" fill="#f4f4f4" text-anchor="middle">26</text>
<text x="776.4" y="425" font-family="Liberation Sans, sans-serif" font-size="11" fill="#f4f4f4" text-anchor="middle">27</text>
<text x="798.6" y="425" font-family="Liberation Sans, sans-serif" font-size="11" fill="#f4f4f4" text-anchor="middle">28</text>
<text x="821.7" y="425" font-family="Liberation Sans, sans-serif" font-size="11" fill="#f4f4f4" text-anchor="middle">29</text>
<text x="843.4" y="425" font-family="Liberation Sans, sans-serif" font-size="11" fill="#f4f4f4" text-anchor="middle">30</text>
<text x="865.6" y="425" font-family="Liberation Sans, sans-serif" font-size="11" fill="#f4f4f4" text-anchor="middle">31</text>
<text x="889.2" y="425" font-family="Liberation Sans, sans-serif" font-size="11" fill="#f4f4f4" text-anchor="middle">1</text>
<path d="M16.5,379.5 H72 Q75.5,379.5 75.5,383 V395 Q75.5,398.5 72,398.5 H16.5 Z" fill="#5c6b7f" stroke="#a9c0cf"/>
<line x1="16.5" y1="379" x2="16.5" y2="406" stroke="#d0e8ec" stroke-width="2"/>
<text x="23.5" y="393" font-family="Liberation Sans, sans-serif" font-size="11" fill="#eef2f6" textLength="45" lengthAdjust="spacingAndGlyphs">Дек 2020</text>
<path d="M397.0,379.5 H454.5 Q458.0,379.5 458.0,383 V395 Q458.0,398.5 454.5,398.5 H397.0 Z" fill="#5c6b7f" stroke="#a9c0cf"/>
<line x1="397.0" y1="379" x2="397.0" y2="406" stroke="#d0e8ec" stroke-width="2"/>
<text x="404.0" y="393" font-family="Liberation Sans, sans-serif" font-size="11" fill="#eef2f6" textLength="47" lengthAdjust="spacingAndGlyphs">Янв 2021</text>
<path d="M890.0,379.5 H948.5 Q952.0,379.5 952.0,383 V395 Q952.0,398.5 948.5,398.5 H890.0 Z" fill="#5c6b7f" stroke="#a9c0cf"/>
<line x1="890.0" y1="379" x2="890.0" y2="406" stroke="#d0e8ec" stroke-width="2"/>
<text x="897.0" y="393" font-family="Liberation Sans, sans-serif" font-size="11" fill="#eef2f6" textLength="48" lengthAdjust="spacingAndGlyphs">Фев 2021</text>
<rect x="46" y="39" width="245" height="13" fill="#39404a"/>
<text x="46" y="51" font-family="Liberation Sans, sans-serif" font-size="11" fill="#2424ee" textLength="104" lengthAdjust="spacingAndGlyphs">ential_Moving_Average</text>
<text x="156" y="51" font-family="Liberation Sans, sans-serif" font-size="11" fill="#e81c1c" textLength="133" lengthAdjust="spacingAndGlyphs">Exponential_Moving_Average</text>
<rect x="15" y="38" width="31" height="22" fill="#f1f1f1"/>
<rect x="15" y="38" width="31" height="5" fill="#d6d6d6"/>
<defs><linearGradient id="gr" x1="0" y1="0" x2="0" y2="1"><stop offset="0" stop-color="#f25a5a"/><stop offset="1" stop-color="#d42a30"/></linearGradient><linearGradient id="gb" x1="0" y1="0" x2="0" y2="1"><stop offset="0" stop-color="#3cb8ec"/><stop offset="1" stop-color="#1a8ccc"/></linearGradient></defs>
<rect x="19.5" y="46" width="9.5" height="9.5" rx="1.5" fill="url(#gr)" stroke="#9a1820"/>
<rect x="32.5" y="46" width="9.5" height="9.5" rx="1.5" fill="url(#gb)" stroke="#16609e"/>
<rect x="16" y="277" width="31" height="11" fill="#39404a"/>
<text x="17.5" y="287" font-family="Liberation Sans, sans-serif" font-size="10.5" fill="#1a1a80" textLength="28" lengthAdjust="spacingAndGlyphs">MACD</text>
<rect x="16" y="329" width="17" height="10" fill="#39404a"/>
<text x="17.5" y="338.5" font-family="Liberation Sans, sans-serif" font-size="11" fill="#f08c30" textLength="14.5" lengthAdjust="spacingAndGlyphs">RSI</text>
<text x="27.5" y="20.5" font-family="Liberation Sans, sans-serif" font-size="12" fill="#4b4a66" textLength="137.5" lengthAdjust="spacingAndGlyphs" xml:space="preserve">График USD /JPY  4 ЧАСА</text>
<path d="M8.5,9 V22.5 H22" fill="none" stroke="#4a6a88" stroke-width="1.2"/>
<path d="M6.5,11 L8.5,8.5 L10.5,11" fill="none" stroke="#4a6a88" stroke-width="1"/>
<path d="M20,20.5 L22.5,22.5 L20,24.5" fill="none" stroke="#4a6a88" stroke-width="1"/>
<line x1="12.5" y1="13" x2="12.5" y2="20.5" stroke="#3a4a4a"/>
<rect x="11.0" y="14.5" width="3" height="4.5" fill="#5aa860" stroke="#3a4a4a" stroke-width="0.8"/>
<line x1="16.5" y1="8" x2="16.5" y2="17.5" stroke="#3a4a4a"/>
<rect x="15.0" y="10" width="3" height="6" fill="#5aa860" stroke="#3a4a4a" stroke-width="0.8"/>
<line x1="20.5" y1="11" x2="20.5" y2="19.5" stroke="#3a4a4a"/>
<rect x="19.0" y="13" width="3" height="5" fill="#a86a6a" stroke="#3a4a4a" stroke-width="0.8"/>
<rect x="865.5" y="16.5" width="11" height="4" rx="1" fill="#f8f8f8" stroke="#555e68"/>
<rect x="899.5" y="12.5" width="10" height="8" rx="1" fill="#f8f8f8" stroke="#555e68"/>
<rect x="902.5" y="15.5" width="4" height="2" fill="none" stroke="#555e68" stroke-width="0.8"/>
<path d="M934,14.2 L941.5,18.8 M941.5,14.2 L934,18.8" stroke="#4e5660" stroke-width="4.4" stroke-linecap="round"/>
<path d="M934,14.2 L941.5,18.8 M941.5,14.2 L934,18.8" stroke="#fafafa" stroke-width="2.4" stroke-linecap="round"/>
<rect x="960" y="0" width="1" height="1" fill="#303030"/>
</svg>
</body></html>
